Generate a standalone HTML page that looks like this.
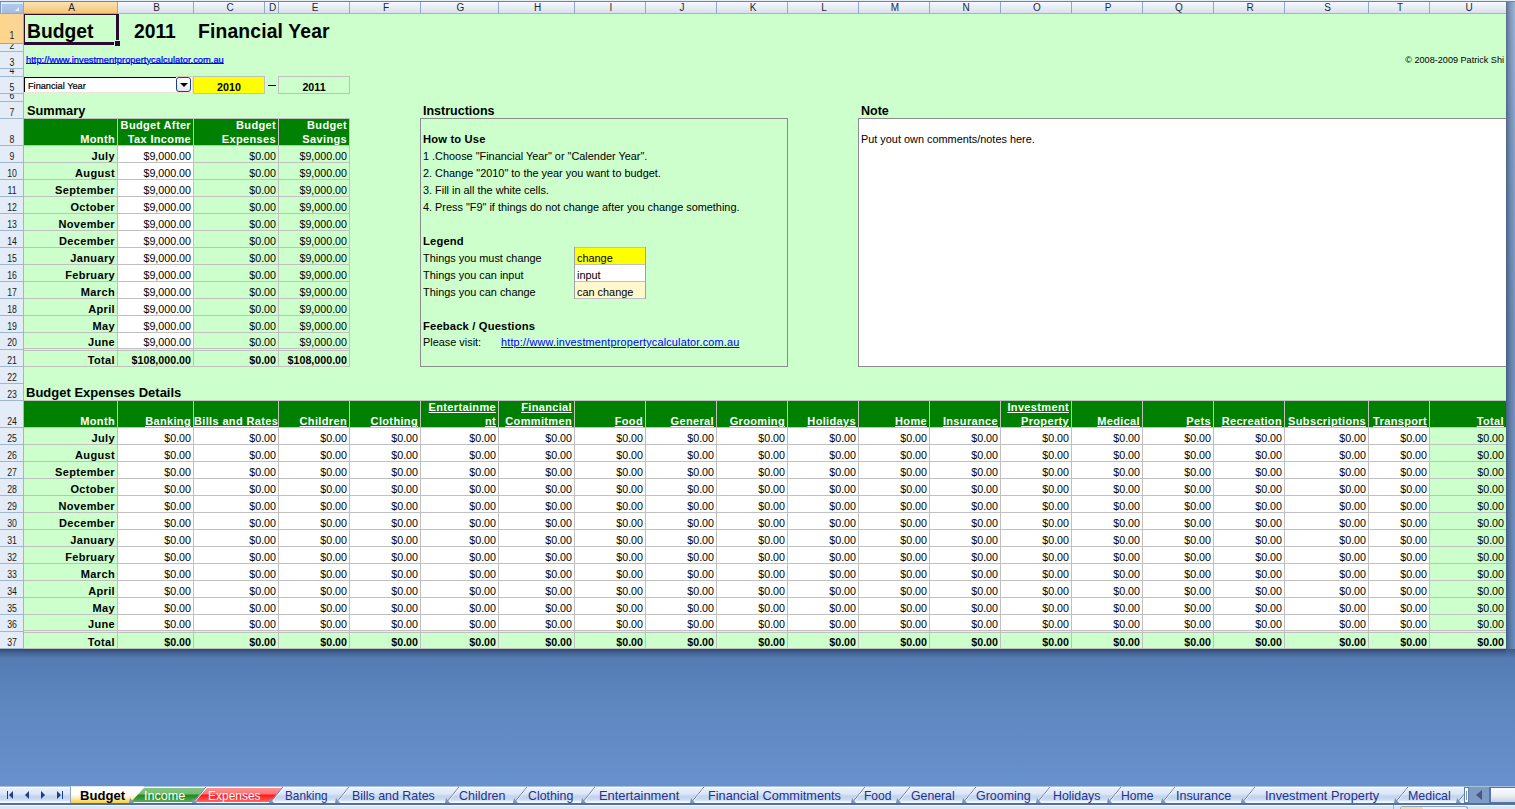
<!DOCTYPE html>
<html><head><meta charset="utf-8"><style>
html,body{margin:0;padding:0;}
body{width:1515px;height:809px;overflow:hidden;position:relative;background:linear-gradient(#587eb4,#6690cb);font-family:"Liberation Sans",sans-serif;}
body>div{position:absolute;}
.t{white-space:nowrap;overflow:visible;}
</style></head><body>
<div style="left:0px;top:0px;width:1515px;height:1px;background:#e3ecf7"></div>
<div style="left:0px;top:1px;width:1515px;height:1px;background:#6787ae"></div>
<div style="left:0px;top:2px;width:1506px;height:11px;background:linear-gradient(#f7f9fc,#e4eaf3 60%,#d8e0ec)"></div>
<div style="left:0px;top:13px;width:1506px;height:1px;background:#9eb6ce"></div>
<div style="left:0px;top:2px;width:23px;height:11px;background:#dfe9f6"></div>
<div style="left:0px;top:2px;width:1px;height:11px;background:#8298b8"></div>
<div style="left:2px;top:4px;width:21px;height:9px;background:linear-gradient(#b0c9ee,#a2bde6)"></div>
<div style="left:15px;top:7px;width:0;height:0;border-left:4px solid transparent;border-bottom:4px solid #e8f0fb"></div>
<div style="left:24px;top:2px;width:93px;height:11px;background:linear-gradient(#fbe3b4,#f8d494 50%,#f4c56e)"></div>
<div style="left:0px;top:13px;width:118px;height:1px;background:#f29436"></div>
<div style="left:23px;top:2px;width:1px;height:12px;background:#f29436"></div>
<div style="left:117px;top:2px;width:1px;height:12px;background:#f29436"></div>
<div style="left:193px;top:2px;width:1px;height:11px;background:#93a6c2"></div>
<div style="left:264px;top:2px;width:1px;height:11px;background:#93a6c2"></div>
<div style="left:278px;top:2px;width:1px;height:11px;background:#93a6c2"></div>
<div style="left:349px;top:2px;width:1px;height:11px;background:#93a6c2"></div>
<div style="left:420px;top:2px;width:1px;height:11px;background:#93a6c2"></div>
<div style="left:498px;top:2px;width:1px;height:11px;background:#93a6c2"></div>
<div style="left:574px;top:2px;width:1px;height:11px;background:#93a6c2"></div>
<div style="left:645px;top:2px;width:1px;height:11px;background:#93a6c2"></div>
<div style="left:716px;top:2px;width:1px;height:11px;background:#93a6c2"></div>
<div style="left:787px;top:2px;width:1px;height:11px;background:#93a6c2"></div>
<div style="left:858px;top:2px;width:1px;height:11px;background:#93a6c2"></div>
<div style="left:929px;top:2px;width:1px;height:11px;background:#93a6c2"></div>
<div style="left:1000px;top:2px;width:1px;height:11px;background:#93a6c2"></div>
<div style="left:1071px;top:2px;width:1px;height:11px;background:#93a6c2"></div>
<div style="left:1142px;top:2px;width:1px;height:11px;background:#93a6c2"></div>
<div style="left:1213px;top:2px;width:1px;height:11px;background:#93a6c2"></div>
<div style="left:1284px;top:2px;width:1px;height:11px;background:#93a6c2"></div>
<div style="left:1368px;top:2px;width:1px;height:11px;background:#93a6c2"></div>
<div style="left:1429px;top:2px;width:1px;height:11px;background:#93a6c2"></div>
<div class="t" style="left:25px;top:2px;width:93px;height:12px;line-height:12px;font-size:10px;text-align:center;color:#1e2a38;">A</div>
<div class="t" style="left:119px;top:2px;width:75px;height:12px;line-height:12px;font-size:10px;text-align:center;color:#1e2a38;">B</div>
<div class="t" style="left:195px;top:2px;width:70px;height:12px;line-height:12px;font-size:10px;text-align:center;color:#1e2a38;">C</div>
<div class="t" style="left:266px;top:2px;width:13px;height:12px;line-height:12px;font-size:10px;text-align:center;color:#1e2a38;">D</div>
<div class="t" style="left:280px;top:2px;width:70px;height:12px;line-height:12px;font-size:10px;text-align:center;color:#1e2a38;">E</div>
<div class="t" style="left:351px;top:2px;width:70px;height:12px;line-height:12px;font-size:10px;text-align:center;color:#1e2a38;">F</div>
<div class="t" style="left:422px;top:2px;width:77px;height:12px;line-height:12px;font-size:10px;text-align:center;color:#1e2a38;">G</div>
<div class="t" style="left:500px;top:2px;width:75px;height:12px;line-height:12px;font-size:10px;text-align:center;color:#1e2a38;">H</div>
<div class="t" style="left:576px;top:2px;width:70px;height:12px;line-height:12px;font-size:10px;text-align:center;color:#1e2a38;">I</div>
<div class="t" style="left:647px;top:2px;width:70px;height:12px;line-height:12px;font-size:10px;text-align:center;color:#1e2a38;">J</div>
<div class="t" style="left:718px;top:2px;width:70px;height:12px;line-height:12px;font-size:10px;text-align:center;color:#1e2a38;">K</div>
<div class="t" style="left:789px;top:2px;width:70px;height:12px;line-height:12px;font-size:10px;text-align:center;color:#1e2a38;">L</div>
<div class="t" style="left:860px;top:2px;width:70px;height:12px;line-height:12px;font-size:10px;text-align:center;color:#1e2a38;">M</div>
<div class="t" style="left:931px;top:2px;width:70px;height:12px;line-height:12px;font-size:10px;text-align:center;color:#1e2a38;">N</div>
<div class="t" style="left:1002px;top:2px;width:70px;height:12px;line-height:12px;font-size:10px;text-align:center;color:#1e2a38;">O</div>
<div class="t" style="left:1073px;top:2px;width:70px;height:12px;line-height:12px;font-size:10px;text-align:center;color:#1e2a38;">P</div>
<div class="t" style="left:1144px;top:2px;width:70px;height:12px;line-height:12px;font-size:10px;text-align:center;color:#1e2a38;">Q</div>
<div class="t" style="left:1215px;top:2px;width:70px;height:12px;line-height:12px;font-size:10px;text-align:center;color:#1e2a38;">R</div>
<div class="t" style="left:1286px;top:2px;width:83px;height:12px;line-height:12px;font-size:10px;text-align:center;color:#1e2a38;">S</div>
<div class="t" style="left:1370px;top:2px;width:60px;height:12px;line-height:12px;font-size:10px;text-align:center;color:#1e2a38;">T</div>
<div class="t" style="left:1431px;top:2px;width:76px;height:12px;line-height:12px;font-size:10px;text-align:center;color:#1e2a38;">U</div>
<div style="left:0px;top:14px;width:23px;height:635px;background:#e4ecf7"></div>
<div style="left:23px;top:14px;width:1px;height:635px;background:#9eb6ce"></div>
<div style="left:0px;top:14px;width:23px;height:29px;background:linear-gradient(90deg,#fdd58c,#fbd595 70%,#f8d49a)"></div>
<div style="left:0px;top:43px;width:24px;height:1px;background:#f29436"></div>
<div style="left:23px;top:14px;width:1px;height:30px;background:#f29436"></div>
<div style="left:0px;top:51px;width:23px;height:1px;background:#9eb6ce"></div>
<div style="left:0px;top:68px;width:23px;height:1px;background:#9eb6ce"></div>
<div style="left:0px;top:76px;width:23px;height:1px;background:#9eb6ce"></div>
<div style="left:0px;top:93px;width:23px;height:1px;background:#9eb6ce"></div>
<div style="left:0px;top:101px;width:23px;height:1px;background:#9eb6ce"></div>
<div style="left:0px;top:118px;width:23px;height:1px;background:#9eb6ce"></div>
<div style="left:0px;top:145px;width:23px;height:1px;background:#9eb6ce"></div>
<div style="left:0px;top:162px;width:23px;height:1px;background:#9eb6ce"></div>
<div style="left:0px;top:179px;width:23px;height:1px;background:#9eb6ce"></div>
<div style="left:0px;top:196px;width:23px;height:1px;background:#9eb6ce"></div>
<div style="left:0px;top:213px;width:23px;height:1px;background:#9eb6ce"></div>
<div style="left:0px;top:230px;width:23px;height:1px;background:#9eb6ce"></div>
<div style="left:0px;top:247px;width:23px;height:1px;background:#9eb6ce"></div>
<div style="left:0px;top:264px;width:23px;height:1px;background:#9eb6ce"></div>
<div style="left:0px;top:281px;width:23px;height:1px;background:#9eb6ce"></div>
<div style="left:0px;top:298px;width:23px;height:1px;background:#9eb6ce"></div>
<div style="left:0px;top:315px;width:23px;height:1px;background:#9eb6ce"></div>
<div style="left:0px;top:332px;width:23px;height:1px;background:#9eb6ce"></div>
<div style="left:0px;top:349px;width:23px;height:1px;background:#9eb6ce"></div>
<div style="left:0px;top:366px;width:23px;height:1px;background:#9eb6ce"></div>
<div style="left:0px;top:383px;width:23px;height:1px;background:#9eb6ce"></div>
<div style="left:0px;top:400px;width:23px;height:1px;background:#9eb6ce"></div>
<div style="left:0px;top:427px;width:23px;height:1px;background:#9eb6ce"></div>
<div style="left:0px;top:444px;width:23px;height:1px;background:#9eb6ce"></div>
<div style="left:0px;top:461px;width:23px;height:1px;background:#9eb6ce"></div>
<div style="left:0px;top:478px;width:23px;height:1px;background:#9eb6ce"></div>
<div style="left:0px;top:495px;width:23px;height:1px;background:#9eb6ce"></div>
<div style="left:0px;top:512px;width:23px;height:1px;background:#9eb6ce"></div>
<div style="left:0px;top:529px;width:23px;height:1px;background:#9eb6ce"></div>
<div style="left:0px;top:546px;width:23px;height:1px;background:#9eb6ce"></div>
<div style="left:0px;top:563px;width:23px;height:1px;background:#9eb6ce"></div>
<div style="left:0px;top:580px;width:23px;height:1px;background:#9eb6ce"></div>
<div style="left:0px;top:597px;width:23px;height:1px;background:#9eb6ce"></div>
<div style="left:0px;top:614px;width:23px;height:1px;background:#9eb6ce"></div>
<div style="left:0px;top:631px;width:23px;height:1px;background:#9eb6ce"></div>
<div style="left:0px;top:648px;width:23px;height:1px;background:#9eb6ce"></div>
<div style="left:0px;top:14px;width:23px;height:29px;overflow:hidden;"><div style="position:absolute;left:0px;width:24px;top:16px;height:12px;line-height:12px;font-size:10px;text-align:center;color:#1a1a1a;white-space:nowrap;transform:scaleX(0.87)">1</div></div>
<div style="left:0px;top:44px;width:23px;height:7px;overflow:hidden;"><div style="position:absolute;left:0px;width:24px;top:-4px;height:12px;line-height:12px;font-size:10px;text-align:center;color:#1a1a1a;white-space:nowrap;transform:scaleX(0.87)">2</div></div>
<div style="left:0px;top:52px;width:23px;height:16px;overflow:hidden;"><div style="position:absolute;left:0px;width:24px;top:5px;height:12px;line-height:12px;font-size:10px;text-align:center;color:#1a1a1a;white-space:nowrap;transform:scaleX(0.87)">3</div></div>
<div style="left:0px;top:69px;width:23px;height:7px;overflow:hidden;"><div style="position:absolute;left:0px;width:24px;top:-4px;height:12px;line-height:12px;font-size:10px;text-align:center;color:#1a1a1a;white-space:nowrap;transform:scaleX(0.87)">4</div></div>
<div style="left:0px;top:77px;width:23px;height:16px;overflow:hidden;"><div style="position:absolute;left:0px;width:24px;top:5px;height:12px;line-height:12px;font-size:10px;text-align:center;color:#1a1a1a;white-space:nowrap;transform:scaleX(0.87)">5</div></div>
<div style="left:0px;top:94px;width:23px;height:7px;overflow:hidden;"><div style="position:absolute;left:0px;width:24px;top:-4px;height:12px;line-height:12px;font-size:10px;text-align:center;color:#1a1a1a;white-space:nowrap;transform:scaleX(0.87)">6</div></div>
<div style="left:0px;top:102px;width:23px;height:16px;overflow:hidden;"><div style="position:absolute;left:0px;width:24px;top:5px;height:12px;line-height:12px;font-size:10px;text-align:center;color:#1a1a1a;white-space:nowrap;transform:scaleX(0.87)">7</div></div>
<div style="left:0px;top:119px;width:23px;height:26px;overflow:hidden;"><div style="position:absolute;left:0px;width:24px;top:15px;height:12px;line-height:12px;font-size:10px;text-align:center;color:#1a1a1a;white-space:nowrap;transform:scaleX(0.87)">8</div></div>
<div style="left:0px;top:146px;width:23px;height:16px;overflow:hidden;"><div style="position:absolute;left:0px;width:24px;top:5px;height:12px;line-height:12px;font-size:10px;text-align:center;color:#1a1a1a;white-space:nowrap;transform:scaleX(0.87)">9</div></div>
<div style="left:0px;top:163px;width:23px;height:16px;overflow:hidden;"><div style="position:absolute;left:0px;width:24px;top:5px;height:12px;line-height:12px;font-size:10px;text-align:center;color:#1a1a1a;white-space:nowrap;transform:scaleX(0.87)">10</div></div>
<div style="left:0px;top:180px;width:23px;height:16px;overflow:hidden;"><div style="position:absolute;left:0px;width:24px;top:5px;height:12px;line-height:12px;font-size:10px;text-align:center;color:#1a1a1a;white-space:nowrap;transform:scaleX(0.87)">11</div></div>
<div style="left:0px;top:197px;width:23px;height:16px;overflow:hidden;"><div style="position:absolute;left:0px;width:24px;top:5px;height:12px;line-height:12px;font-size:10px;text-align:center;color:#1a1a1a;white-space:nowrap;transform:scaleX(0.87)">12</div></div>
<div style="left:0px;top:214px;width:23px;height:16px;overflow:hidden;"><div style="position:absolute;left:0px;width:24px;top:5px;height:12px;line-height:12px;font-size:10px;text-align:center;color:#1a1a1a;white-space:nowrap;transform:scaleX(0.87)">13</div></div>
<div style="left:0px;top:231px;width:23px;height:16px;overflow:hidden;"><div style="position:absolute;left:0px;width:24px;top:5px;height:12px;line-height:12px;font-size:10px;text-align:center;color:#1a1a1a;white-space:nowrap;transform:scaleX(0.87)">14</div></div>
<div style="left:0px;top:248px;width:23px;height:16px;overflow:hidden;"><div style="position:absolute;left:0px;width:24px;top:5px;height:12px;line-height:12px;font-size:10px;text-align:center;color:#1a1a1a;white-space:nowrap;transform:scaleX(0.87)">15</div></div>
<div style="left:0px;top:265px;width:23px;height:16px;overflow:hidden;"><div style="position:absolute;left:0px;width:24px;top:5px;height:12px;line-height:12px;font-size:10px;text-align:center;color:#1a1a1a;white-space:nowrap;transform:scaleX(0.87)">16</div></div>
<div style="left:0px;top:282px;width:23px;height:16px;overflow:hidden;"><div style="position:absolute;left:0px;width:24px;top:5px;height:12px;line-height:12px;font-size:10px;text-align:center;color:#1a1a1a;white-space:nowrap;transform:scaleX(0.87)">17</div></div>
<div style="left:0px;top:299px;width:23px;height:16px;overflow:hidden;"><div style="position:absolute;left:0px;width:24px;top:5px;height:12px;line-height:12px;font-size:10px;text-align:center;color:#1a1a1a;white-space:nowrap;transform:scaleX(0.87)">18</div></div>
<div style="left:0px;top:316px;width:23px;height:16px;overflow:hidden;"><div style="position:absolute;left:0px;width:24px;top:5px;height:12px;line-height:12px;font-size:10px;text-align:center;color:#1a1a1a;white-space:nowrap;transform:scaleX(0.87)">19</div></div>
<div style="left:0px;top:333px;width:23px;height:16px;overflow:hidden;"><div style="position:absolute;left:0px;width:24px;top:4px;height:12px;line-height:12px;font-size:10px;text-align:center;color:#1a1a1a;white-space:nowrap;transform:scaleX(0.87)">20</div></div>
<div style="left:0px;top:350px;width:23px;height:16px;overflow:hidden;"><div style="position:absolute;left:0px;width:24px;top:5px;height:12px;line-height:12px;font-size:10px;text-align:center;color:#1a1a1a;white-space:nowrap;transform:scaleX(0.87)">21</div></div>
<div style="left:0px;top:367px;width:23px;height:16px;overflow:hidden;"><div style="position:absolute;left:0px;width:24px;top:5px;height:12px;line-height:12px;font-size:10px;text-align:center;color:#1a1a1a;white-space:nowrap;transform:scaleX(0.87)">22</div></div>
<div style="left:0px;top:384px;width:23px;height:16px;overflow:hidden;"><div style="position:absolute;left:0px;width:24px;top:5px;height:12px;line-height:12px;font-size:10px;text-align:center;color:#1a1a1a;white-space:nowrap;transform:scaleX(0.87)">23</div></div>
<div style="left:0px;top:401px;width:23px;height:26px;overflow:hidden;"><div style="position:absolute;left:0px;width:24px;top:15px;height:12px;line-height:12px;font-size:10px;text-align:center;color:#1a1a1a;white-space:nowrap;transform:scaleX(0.87)">24</div></div>
<div style="left:0px;top:428px;width:23px;height:16px;overflow:hidden;"><div style="position:absolute;left:0px;width:24px;top:5px;height:12px;line-height:12px;font-size:10px;text-align:center;color:#1a1a1a;white-space:nowrap;transform:scaleX(0.87)">25</div></div>
<div style="left:0px;top:445px;width:23px;height:16px;overflow:hidden;"><div style="position:absolute;left:0px;width:24px;top:5px;height:12px;line-height:12px;font-size:10px;text-align:center;color:#1a1a1a;white-space:nowrap;transform:scaleX(0.87)">26</div></div>
<div style="left:0px;top:462px;width:23px;height:16px;overflow:hidden;"><div style="position:absolute;left:0px;width:24px;top:5px;height:12px;line-height:12px;font-size:10px;text-align:center;color:#1a1a1a;white-space:nowrap;transform:scaleX(0.87)">27</div></div>
<div style="left:0px;top:479px;width:23px;height:16px;overflow:hidden;"><div style="position:absolute;left:0px;width:24px;top:5px;height:12px;line-height:12px;font-size:10px;text-align:center;color:#1a1a1a;white-space:nowrap;transform:scaleX(0.87)">28</div></div>
<div style="left:0px;top:496px;width:23px;height:16px;overflow:hidden;"><div style="position:absolute;left:0px;width:24px;top:5px;height:12px;line-height:12px;font-size:10px;text-align:center;color:#1a1a1a;white-space:nowrap;transform:scaleX(0.87)">29</div></div>
<div style="left:0px;top:513px;width:23px;height:16px;overflow:hidden;"><div style="position:absolute;left:0px;width:24px;top:5px;height:12px;line-height:12px;font-size:10px;text-align:center;color:#1a1a1a;white-space:nowrap;transform:scaleX(0.87)">30</div></div>
<div style="left:0px;top:530px;width:23px;height:16px;overflow:hidden;"><div style="position:absolute;left:0px;width:24px;top:5px;height:12px;line-height:12px;font-size:10px;text-align:center;color:#1a1a1a;white-space:nowrap;transform:scaleX(0.87)">31</div></div>
<div style="left:0px;top:547px;width:23px;height:16px;overflow:hidden;"><div style="position:absolute;left:0px;width:24px;top:5px;height:12px;line-height:12px;font-size:10px;text-align:center;color:#1a1a1a;white-space:nowrap;transform:scaleX(0.87)">32</div></div>
<div style="left:0px;top:564px;width:23px;height:16px;overflow:hidden;"><div style="position:absolute;left:0px;width:24px;top:5px;height:12px;line-height:12px;font-size:10px;text-align:center;color:#1a1a1a;white-space:nowrap;transform:scaleX(0.87)">33</div></div>
<div style="left:0px;top:581px;width:23px;height:16px;overflow:hidden;"><div style="position:absolute;left:0px;width:24px;top:5px;height:12px;line-height:12px;font-size:10px;text-align:center;color:#1a1a1a;white-space:nowrap;transform:scaleX(0.87)">34</div></div>
<div style="left:0px;top:598px;width:23px;height:16px;overflow:hidden;"><div style="position:absolute;left:0px;width:24px;top:5px;height:12px;line-height:12px;font-size:10px;text-align:center;color:#1a1a1a;white-space:nowrap;transform:scaleX(0.87)">35</div></div>
<div style="left:0px;top:615px;width:23px;height:16px;overflow:hidden;"><div style="position:absolute;left:0px;width:24px;top:4px;height:12px;line-height:12px;font-size:10px;text-align:center;color:#1a1a1a;white-space:nowrap;transform:scaleX(0.87)">36</div></div>
<div style="left:0px;top:632px;width:23px;height:16px;overflow:hidden;"><div style="position:absolute;left:0px;width:24px;top:5px;height:12px;line-height:12px;font-size:10px;text-align:center;color:#1a1a1a;white-space:nowrap;transform:scaleX(0.87)">37</div></div>
<div style="left:24px;top:14px;width:1482px;height:635px;background:#ccffcc"></div>
<div style="left:1506px;top:2px;width:9px;height:648px;background:linear-gradient(90deg,rgba(30,45,70,0.55),rgba(30,45,70,0.25) 45%,rgba(30,45,70,0.05)),linear-gradient(#a3bbe0,#8eaad4 20%,#7a9ac8 50%,#6e93c9)"></div>
<div style="left:0px;top:649px;width:1515px;height:137px;background:linear-gradient(#5279b0,#5e87c0 40%,#6892cd)"></div>
<div class="t" style="left:27px;top:20px;width:173px;height:23px;line-height:23px;font-size:19.3px;text-align:left;color:#000;font-weight:bold;">Budget</div>
<div class="t" style="left:134px;top:20px;width:66px;height:23px;line-height:23px;font-size:19.3px;text-align:left;color:#000;font-weight:bold;">2011</div>
<div class="t" style="left:198px;top:20px;width:202px;height:23px;line-height:23px;font-size:19.3px;text-align:left;color:#000;font-weight:bold;letter-spacing:0.17px;">Financial Year</div>
<div style="left:24px;top:14px;width:1px;height:30px;background:#2a0a35"></div>
<div style="left:24px;top:14px;width:95px;height:1px;background:#2a0a35"></div>
<div style="left:116px;top:14px;width:3px;height:26px;background:#2a0a35"></div>
<div style="left:24px;top:42px;width:90px;height:3px;background:#2a0a35"></div>
<div style="left:115px;top:41px;width:5px;height:5px;background:#2a0a35"></div>
<div class="t" style="left:26px;top:55px;width:274px;height:11px;line-height:11px;font-size:9.3px;text-align:left;color:#0000ff;text-decoration:underline;letter-spacing:0.02px;text-underline-offset:0px;-webkit-text-stroke:0.25px #0000ff;">http://www.investmentpropertycalculator.com.au</div>
<div class="t" style="left:1300px;top:55px;width:204px;height:11px;line-height:11px;font-size:9.1px;text-align:right;color:#000;">&copy; 2008-2009 Patrick Shi</div>
<div style="left:24px;top:77px;width:169px;height:16px;background:#fff"></div>
<div style="left:24px;top:77px;width:152px;height:1px;background:#000"></div>
<div style="left:176px;top:76px;width:17px;height:1px;background:#d8cbb8"></div>
<div style="left:192px;top:76px;width:1px;height:17px;background:#e8e0d4"></div>
<div style="left:24px;top:77px;width:1px;height:15px;background:#000"></div>
<div style="left:24px;top:92px;width:169px;height:1px;background:#ece4d6"></div>
<div class="t" style="left:28px;top:81px;width:142px;height:11px;line-height:11px;font-size:9.2px;text-align:left;color:#000;-webkit-text-stroke:0.2px #000;">Financial Year</div>
<div style="left:176px;top:77px;width:15px;height:15px;background:linear-gradient(#ffffff,#f3f1f3 60%,#e6e6ec);border:1px solid #1a4288;border-radius:3px;box-sizing:border-box"></div>
<div style="left:179.5px;top:83px;width:0;height:0;border-left:4px solid transparent;border-right:4px solid transparent;border-top:4.5px solid #000"></div>
<div style="left:194px;top:77px;width:70px;height:16px;background:#ffff00"></div>
<div style="left:193px;top:76px;width:72px;height:1px;background:#c0c0c0"></div>
<div style="left:193px;top:93px;width:72px;height:1px;background:#c0c0c0"></div>
<div style="left:193px;top:76px;width:1px;height:18px;background:#c0c0c0"></div>
<div style="left:264px;top:76px;width:1px;height:18px;background:#c0c0c0"></div>
<div class="t" style="left:194px;top:81px;width:70px;height:13px;line-height:13px;font-size:10.7px;text-align:center;color:#000;font-weight:bold;">2010</div>
<div style="left:268px;top:85px;width:8px;height:1px;background:#000"></div>
<div style="left:278px;top:76px;width:72px;height:1px;background:#c0c0c0"></div>
<div style="left:278px;top:93px;width:72px;height:1px;background:#c0c0c0"></div>
<div style="left:278px;top:76px;width:1px;height:18px;background:#c0c0c0"></div>
<div style="left:349px;top:76px;width:1px;height:18px;background:#c0c0c0"></div>
<div class="t" style="left:279px;top:81px;width:70px;height:13px;line-height:13px;font-size:10.7px;text-align:center;color:#000;font-weight:bold;">2011</div>
<div class="t" style="left:27px;top:103px;width:173px;height:15px;line-height:15px;font-size:12.8px;text-align:left;color:#000;font-weight:bold;">Summary</div>
<div class="t" style="left:423px;top:104px;width:177px;height:15px;line-height:15px;font-size:12.5px;text-align:left;color:#000;font-weight:bold;">Instructions</div>
<div class="t" style="left:861px;top:104px;width:139px;height:15px;line-height:15px;font-size:12.5px;text-align:left;color:#000;font-weight:bold;">Note</div>
<div style="left:24px;top:119px;width:325px;height:26px;background:#008000"></div>
<div style="left:24px;top:146px;width:93px;height:16px;background:#ccffcc"></div>
<div style="left:118px;top:146px;width:75px;height:16px;background:#ffffff"></div>
<div style="left:194px;top:146px;width:84px;height:16px;background:#ccffcc"></div>
<div style="left:279px;top:146px;width:70px;height:16px;background:#ccffcc"></div>
<div style="left:24px;top:163px;width:93px;height:16px;background:#ccffcc"></div>
<div style="left:118px;top:163px;width:75px;height:16px;background:#ffffff"></div>
<div style="left:194px;top:163px;width:84px;height:16px;background:#ccffcc"></div>
<div style="left:279px;top:163px;width:70px;height:16px;background:#ccffcc"></div>
<div style="left:24px;top:180px;width:93px;height:16px;background:#ccffcc"></div>
<div style="left:118px;top:180px;width:75px;height:16px;background:#ffffff"></div>
<div style="left:194px;top:180px;width:84px;height:16px;background:#ccffcc"></div>
<div style="left:279px;top:180px;width:70px;height:16px;background:#ccffcc"></div>
<div style="left:24px;top:197px;width:93px;height:16px;background:#ccffcc"></div>
<div style="left:118px;top:197px;width:75px;height:16px;background:#ffffff"></div>
<div style="left:194px;top:197px;width:84px;height:16px;background:#ccffcc"></div>
<div style="left:279px;top:197px;width:70px;height:16px;background:#ccffcc"></div>
<div style="left:24px;top:214px;width:93px;height:16px;background:#ccffcc"></div>
<div style="left:118px;top:214px;width:75px;height:16px;background:#ffffff"></div>
<div style="left:194px;top:214px;width:84px;height:16px;background:#ccffcc"></div>
<div style="left:279px;top:214px;width:70px;height:16px;background:#ccffcc"></div>
<div style="left:24px;top:231px;width:93px;height:16px;background:#ccffcc"></div>
<div style="left:118px;top:231px;width:75px;height:16px;background:#ffffff"></div>
<div style="left:194px;top:231px;width:84px;height:16px;background:#ccffcc"></div>
<div style="left:279px;top:231px;width:70px;height:16px;background:#ccffcc"></div>
<div style="left:24px;top:248px;width:93px;height:16px;background:#ccffcc"></div>
<div style="left:118px;top:248px;width:75px;height:16px;background:#ffffff"></div>
<div style="left:194px;top:248px;width:84px;height:16px;background:#ccffcc"></div>
<div style="left:279px;top:248px;width:70px;height:16px;background:#ccffcc"></div>
<div style="left:24px;top:265px;width:93px;height:16px;background:#ccffcc"></div>
<div style="left:118px;top:265px;width:75px;height:16px;background:#ffffff"></div>
<div style="left:194px;top:265px;width:84px;height:16px;background:#ccffcc"></div>
<div style="left:279px;top:265px;width:70px;height:16px;background:#ccffcc"></div>
<div style="left:24px;top:282px;width:93px;height:16px;background:#ccffcc"></div>
<div style="left:118px;top:282px;width:75px;height:16px;background:#ffffff"></div>
<div style="left:194px;top:282px;width:84px;height:16px;background:#ccffcc"></div>
<div style="left:279px;top:282px;width:70px;height:16px;background:#ccffcc"></div>
<div style="left:24px;top:299px;width:93px;height:16px;background:#ccffcc"></div>
<div style="left:118px;top:299px;width:75px;height:16px;background:#ffffff"></div>
<div style="left:194px;top:299px;width:84px;height:16px;background:#ccffcc"></div>
<div style="left:279px;top:299px;width:70px;height:16px;background:#ccffcc"></div>
<div style="left:24px;top:316px;width:93px;height:16px;background:#ccffcc"></div>
<div style="left:118px;top:316px;width:75px;height:16px;background:#ffffff"></div>
<div style="left:194px;top:316px;width:84px;height:16px;background:#ccffcc"></div>
<div style="left:279px;top:316px;width:70px;height:16px;background:#ccffcc"></div>
<div style="left:24px;top:333px;width:93px;height:16px;background:#ccffcc"></div>
<div style="left:118px;top:333px;width:75px;height:16px;background:#ffffff"></div>
<div style="left:194px;top:333px;width:84px;height:16px;background:#ccffcc"></div>
<div style="left:279px;top:333px;width:70px;height:16px;background:#ccffcc"></div>
<div style="left:24px;top:350px;width:93px;height:16px;background:#ccffcc"></div>
<div style="left:118px;top:350px;width:75px;height:16px;background:#ccffcc"></div>
<div style="left:194px;top:350px;width:84px;height:16px;background:#ccffcc"></div>
<div style="left:279px;top:350px;width:70px;height:16px;background:#ccffcc"></div>
<div style="left:24px;top:118px;width:326px;height:1px;background:#c0c0c0"></div>
<div style="left:24px;top:145px;width:326px;height:1px;background:#c0c0c0"></div>
<div style="left:24px;top:162px;width:326px;height:1px;background:#c0c0c0"></div>
<div style="left:24px;top:179px;width:326px;height:1px;background:#c0c0c0"></div>
<div style="left:24px;top:196px;width:326px;height:1px;background:#c0c0c0"></div>
<div style="left:24px;top:213px;width:326px;height:1px;background:#c0c0c0"></div>
<div style="left:24px;top:230px;width:326px;height:1px;background:#c0c0c0"></div>
<div style="left:24px;top:247px;width:326px;height:1px;background:#c0c0c0"></div>
<div style="left:24px;top:264px;width:326px;height:1px;background:#c0c0c0"></div>
<div style="left:24px;top:281px;width:326px;height:1px;background:#c0c0c0"></div>
<div style="left:24px;top:298px;width:326px;height:1px;background:#c0c0c0"></div>
<div style="left:24px;top:315px;width:326px;height:1px;background:#c0c0c0"></div>
<div style="left:24px;top:332px;width:326px;height:1px;background:#c0c0c0"></div>
<div style="left:24px;top:348px;width:326px;height:1px;background:#c0c0c0"></div>
<div style="left:24px;top:350px;width:326px;height:1px;background:#c0c0c0"></div>
<div style="left:24px;top:366px;width:326px;height:1px;background:#c0c0c0"></div>
<div style="left:117px;top:118px;width:1px;height:249px;background:#c0c0c0"></div>
<div style="left:193px;top:118px;width:1px;height:249px;background:#c0c0c0"></div>
<div style="left:278px;top:118px;width:1px;height:249px;background:#c0c0c0"></div>
<div style="left:349px;top:118px;width:1px;height:249px;background:#c0c0c0"></div>
<div class="t" style="left:24px;top:133px;width:91px;height:13px;line-height:13px;font-size:11px;text-align:right;color:#fff;font-weight:bold;letter-spacing:0.35px;">Month</div>
<div class="t" style="left:118px;top:133px;width:73px;height:13px;line-height:13px;font-size:11px;text-align:right;color:#fff;font-weight:bold;letter-spacing:0.35px;">Tax Income</div>
<div class="t" style="left:118px;top:119px;width:73px;height:13px;line-height:13px;font-size:11px;text-align:right;color:#fff;font-weight:bold;letter-spacing:0.35px;">Budget After</div>
<div class="t" style="left:194px;top:133px;width:82px;height:13px;line-height:13px;font-size:11px;text-align:right;color:#fff;font-weight:bold;letter-spacing:0.35px;">Expenses</div>
<div class="t" style="left:194px;top:119px;width:82px;height:13px;line-height:13px;font-size:11px;text-align:right;color:#fff;font-weight:bold;letter-spacing:0.35px;">Budget</div>
<div class="t" style="left:279px;top:133px;width:68px;height:13px;line-height:13px;font-size:11px;text-align:right;color:#fff;font-weight:bold;letter-spacing:0.35px;">Savings</div>
<div class="t" style="left:279px;top:119px;width:68px;height:13px;line-height:13px;font-size:11px;text-align:right;color:#fff;font-weight:bold;letter-spacing:0.35px;">Budget</div>
<div class="t" style="left:24px;top:150px;width:91px;height:13px;line-height:13px;font-size:11px;text-align:right;color:#000;font-weight:bold;letter-spacing:0.35px;">July</div>
<div class="t" style="left:118px;top:150px;width:73px;height:13px;line-height:13px;font-size:10.7px;text-align:right;color:#000;">$9,000.00</div>
<div class="t" style="left:194px;top:150px;width:82px;height:13px;line-height:13px;font-size:10.7px;text-align:right;color:#000;">$0.00</div>
<div class="t" style="left:279px;top:150px;width:68px;height:13px;line-height:13px;font-size:10.7px;text-align:right;color:#000;">$9,000.00</div>
<div class="t" style="left:24px;top:167px;width:91px;height:13px;line-height:13px;font-size:11px;text-align:right;color:#000;font-weight:bold;letter-spacing:0.35px;">August</div>
<div class="t" style="left:118px;top:167px;width:73px;height:13px;line-height:13px;font-size:10.7px;text-align:right;color:#000;">$9,000.00</div>
<div class="t" style="left:194px;top:167px;width:82px;height:13px;line-height:13px;font-size:10.7px;text-align:right;color:#000;">$0.00</div>
<div class="t" style="left:279px;top:167px;width:68px;height:13px;line-height:13px;font-size:10.7px;text-align:right;color:#000;">$9,000.00</div>
<div class="t" style="left:24px;top:184px;width:91px;height:13px;line-height:13px;font-size:11px;text-align:right;color:#000;font-weight:bold;letter-spacing:0.35px;">September</div>
<div class="t" style="left:118px;top:184px;width:73px;height:13px;line-height:13px;font-size:10.7px;text-align:right;color:#000;">$9,000.00</div>
<div class="t" style="left:194px;top:184px;width:82px;height:13px;line-height:13px;font-size:10.7px;text-align:right;color:#000;">$0.00</div>
<div class="t" style="left:279px;top:184px;width:68px;height:13px;line-height:13px;font-size:10.7px;text-align:right;color:#000;">$9,000.00</div>
<div class="t" style="left:24px;top:201px;width:91px;height:13px;line-height:13px;font-size:11px;text-align:right;color:#000;font-weight:bold;letter-spacing:0.35px;">October</div>
<div class="t" style="left:118px;top:201px;width:73px;height:13px;line-height:13px;font-size:10.7px;text-align:right;color:#000;">$9,000.00</div>
<div class="t" style="left:194px;top:201px;width:82px;height:13px;line-height:13px;font-size:10.7px;text-align:right;color:#000;">$0.00</div>
<div class="t" style="left:279px;top:201px;width:68px;height:13px;line-height:13px;font-size:10.7px;text-align:right;color:#000;">$9,000.00</div>
<div class="t" style="left:24px;top:218px;width:91px;height:13px;line-height:13px;font-size:11px;text-align:right;color:#000;font-weight:bold;letter-spacing:0.35px;">November</div>
<div class="t" style="left:118px;top:218px;width:73px;height:13px;line-height:13px;font-size:10.7px;text-align:right;color:#000;">$9,000.00</div>
<div class="t" style="left:194px;top:218px;width:82px;height:13px;line-height:13px;font-size:10.7px;text-align:right;color:#000;">$0.00</div>
<div class="t" style="left:279px;top:218px;width:68px;height:13px;line-height:13px;font-size:10.7px;text-align:right;color:#000;">$9,000.00</div>
<div class="t" style="left:24px;top:235px;width:91px;height:13px;line-height:13px;font-size:11px;text-align:right;color:#000;font-weight:bold;letter-spacing:0.35px;">December</div>
<div class="t" style="left:118px;top:235px;width:73px;height:13px;line-height:13px;font-size:10.7px;text-align:right;color:#000;">$9,000.00</div>
<div class="t" style="left:194px;top:235px;width:82px;height:13px;line-height:13px;font-size:10.7px;text-align:right;color:#000;">$0.00</div>
<div class="t" style="left:279px;top:235px;width:68px;height:13px;line-height:13px;font-size:10.7px;text-align:right;color:#000;">$9,000.00</div>
<div class="t" style="left:24px;top:252px;width:91px;height:13px;line-height:13px;font-size:11px;text-align:right;color:#000;font-weight:bold;letter-spacing:0.35px;">January</div>
<div class="t" style="left:118px;top:252px;width:73px;height:13px;line-height:13px;font-size:10.7px;text-align:right;color:#000;">$9,000.00</div>
<div class="t" style="left:194px;top:252px;width:82px;height:13px;line-height:13px;font-size:10.7px;text-align:right;color:#000;">$0.00</div>
<div class="t" style="left:279px;top:252px;width:68px;height:13px;line-height:13px;font-size:10.7px;text-align:right;color:#000;">$9,000.00</div>
<div class="t" style="left:24px;top:269px;width:91px;height:13px;line-height:13px;font-size:11px;text-align:right;color:#000;font-weight:bold;letter-spacing:0.35px;">February</div>
<div class="t" style="left:118px;top:269px;width:73px;height:13px;line-height:13px;font-size:10.7px;text-align:right;color:#000;">$9,000.00</div>
<div class="t" style="left:194px;top:269px;width:82px;height:13px;line-height:13px;font-size:10.7px;text-align:right;color:#000;">$0.00</div>
<div class="t" style="left:279px;top:269px;width:68px;height:13px;line-height:13px;font-size:10.7px;text-align:right;color:#000;">$9,000.00</div>
<div class="t" style="left:24px;top:286px;width:91px;height:13px;line-height:13px;font-size:11px;text-align:right;color:#000;font-weight:bold;letter-spacing:0.35px;">March</div>
<div class="t" style="left:118px;top:286px;width:73px;height:13px;line-height:13px;font-size:10.7px;text-align:right;color:#000;">$9,000.00</div>
<div class="t" style="left:194px;top:286px;width:82px;height:13px;line-height:13px;font-size:10.7px;text-align:right;color:#000;">$0.00</div>
<div class="t" style="left:279px;top:286px;width:68px;height:13px;line-height:13px;font-size:10.7px;text-align:right;color:#000;">$9,000.00</div>
<div class="t" style="left:24px;top:303px;width:91px;height:13px;line-height:13px;font-size:11px;text-align:right;color:#000;font-weight:bold;letter-spacing:0.35px;">April</div>
<div class="t" style="left:118px;top:303px;width:73px;height:13px;line-height:13px;font-size:10.7px;text-align:right;color:#000;">$9,000.00</div>
<div class="t" style="left:194px;top:303px;width:82px;height:13px;line-height:13px;font-size:10.7px;text-align:right;color:#000;">$0.00</div>
<div class="t" style="left:279px;top:303px;width:68px;height:13px;line-height:13px;font-size:10.7px;text-align:right;color:#000;">$9,000.00</div>
<div class="t" style="left:24px;top:320px;width:91px;height:13px;line-height:13px;font-size:11px;text-align:right;color:#000;font-weight:bold;letter-spacing:0.35px;">May</div>
<div class="t" style="left:118px;top:320px;width:73px;height:13px;line-height:13px;font-size:10.7px;text-align:right;color:#000;">$9,000.00</div>
<div class="t" style="left:194px;top:320px;width:82px;height:13px;line-height:13px;font-size:10.7px;text-align:right;color:#000;">$0.00</div>
<div class="t" style="left:279px;top:320px;width:68px;height:13px;line-height:13px;font-size:10.7px;text-align:right;color:#000;">$9,000.00</div>
<div class="t" style="left:24px;top:336px;width:91px;height:13px;line-height:13px;font-size:11px;text-align:right;color:#000;font-weight:bold;letter-spacing:0.35px;">June</div>
<div class="t" style="left:118px;top:336px;width:73px;height:13px;line-height:13px;font-size:10.7px;text-align:right;color:#000;">$9,000.00</div>
<div class="t" style="left:194px;top:336px;width:82px;height:13px;line-height:13px;font-size:10.7px;text-align:right;color:#000;">$0.00</div>
<div class="t" style="left:279px;top:336px;width:68px;height:13px;line-height:13px;font-size:10.7px;text-align:right;color:#000;">$9,000.00</div>
<div class="t" style="left:24px;top:354px;width:91px;height:13px;line-height:13px;font-size:11px;text-align:right;color:#000;font-weight:bold;letter-spacing:0.35px;">Total</div>
<div class="t" style="left:118px;top:354px;width:73px;height:13px;line-height:13px;font-size:10.7px;text-align:right;color:#000;font-weight:bold;">$108,000.00</div>
<div class="t" style="left:194px;top:354px;width:82px;height:13px;line-height:13px;font-size:10.7px;text-align:right;color:#000;font-weight:bold;">$0.00</div>
<div class="t" style="left:279px;top:354px;width:68px;height:13px;line-height:13px;font-size:10.7px;text-align:right;color:#000;font-weight:bold;">$108,000.00</div>
<div style="left:420px;top:118px;width:368px;height:249px;border:1px solid #8c8c8c;box-sizing:border-box"></div>
<div class="t" style="left:423px;top:133px;width:377px;height:13px;line-height:13px;font-size:11.2px;text-align:left;color:#000;font-weight:bold;letter-spacing:0.17px;">How to Use</div>
<div class="t" style="left:423px;top:150px;width:377px;height:13px;line-height:13px;font-size:10.9px;text-align:left;color:#000;">1 .Choose "Financial Year" or "Calender Year".</div>
<div class="t" style="left:423px;top:167px;width:377px;height:13px;line-height:13px;font-size:10.9px;text-align:left;color:#000;">2. Change "2010" to the year you want to budget.</div>
<div class="t" style="left:423px;top:184px;width:377px;height:13px;line-height:13px;font-size:10.9px;text-align:left;color:#000;">3. Fill in all the white cells.</div>
<div class="t" style="left:423px;top:201px;width:377px;height:13px;line-height:13px;font-size:10.9px;text-align:left;color:#000;">4. Press "F9" if things do not change after you change something.</div>
<div class="t" style="left:423px;top:235px;width:377px;height:13px;line-height:13px;font-size:11.2px;text-align:left;color:#000;font-weight:bold;letter-spacing:0.17px;">Legend</div>
<div class="t" style="left:423px;top:252px;width:377px;height:13px;line-height:13px;font-size:10.9px;text-align:left;color:#000;">Things you must change</div>
<div class="t" style="left:423px;top:269px;width:377px;height:13px;line-height:13px;font-size:10.9px;text-align:left;color:#000;">Things you can input</div>
<div class="t" style="left:423px;top:286px;width:377px;height:13px;line-height:13px;font-size:10.9px;text-align:left;color:#000;">Things you can change</div>
<div style="left:575px;top:248px;width:70px;height:16px;background:#ffff00"></div>
<div style="left:575px;top:265px;width:70px;height:16px;background:#ffffff"></div>
<div style="left:575px;top:282px;width:70px;height:16px;background:#fff8cc"></div>
<div style="left:574px;top:247px;width:72px;height:1px;background:#c0c0c0"></div>
<div style="left:574px;top:264px;width:72px;height:1px;background:#c0c0c0"></div>
<div style="left:574px;top:281px;width:72px;height:1px;background:#c0c0c0"></div>
<div style="left:574px;top:298px;width:72px;height:1px;background:#c0c0c0"></div>
<div style="left:574px;top:247px;width:1px;height:52px;background:#a0a0a0"></div>
<div style="left:645px;top:247px;width:1px;height:52px;background:#a0a0a0"></div>
<div class="t" style="left:577px;top:252px;width:223px;height:13px;line-height:13px;font-size:10.9px;text-align:left;color:#000;">change</div>
<div class="t" style="left:577px;top:269px;width:223px;height:13px;line-height:13px;font-size:10.9px;text-align:left;color:#000;">input</div>
<div class="t" style="left:577px;top:286px;width:223px;height:13px;line-height:13px;font-size:10.9px;text-align:left;color:#000;">can change</div>
<div class="t" style="left:423px;top:320px;width:377px;height:13px;line-height:13px;font-size:11.2px;text-align:left;color:#000;font-weight:bold;letter-spacing:0.17px;">Feeback / Questions</div>
<div class="t" style="left:423px;top:336px;width:377px;height:13px;line-height:13px;font-size:10.9px;text-align:left;color:#000;">Please visit:</div>
<div class="t" style="left:501px;top:336px;width:299px;height:13px;line-height:13px;font-size:10.9px;text-align:left;color:#0000ff;text-decoration:underline;letter-spacing:0.17px;">http://www.investmentpropertycalculator.com.au</div>
<div style="left:858px;top:118px;width:648px;height:249px;background:#fff;border:1px solid #8c8c8c;border-right:none;box-sizing:border-box"></div>
<div class="t" style="left:861px;top:133px;width:539px;height:13px;line-height:13px;font-size:10.9px;text-align:left;color:#000;">Put yout own comments/notes here.</div>
<div class="t" style="left:26px;top:385px;width:374px;height:16px;line-height:16px;font-size:13.0px;text-align:left;color:#000;font-weight:bold;">Budget Expenses Details</div>
<div style="left:24px;top:401px;width:1482px;height:26px;background:#008000"></div>
<div style="left:24px;top:428px;width:93px;height:16px;background:#ccffcc"></div>
<div style="left:118px;top:428px;width:75px;height:16px;background:#ffffff"></div>
<div style="left:194px;top:428px;width:84px;height:16px;background:#ffffff"></div>
<div style="left:279px;top:428px;width:70px;height:16px;background:#ffffff"></div>
<div style="left:350px;top:428px;width:70px;height:16px;background:#ffffff"></div>
<div style="left:421px;top:428px;width:77px;height:16px;background:#ffffff"></div>
<div style="left:499px;top:428px;width:75px;height:16px;background:#ffffff"></div>
<div style="left:575px;top:428px;width:70px;height:16px;background:#ffffff"></div>
<div style="left:646px;top:428px;width:70px;height:16px;background:#ffffff"></div>
<div style="left:717px;top:428px;width:70px;height:16px;background:#ffffff"></div>
<div style="left:788px;top:428px;width:70px;height:16px;background:#ffffff"></div>
<div style="left:859px;top:428px;width:70px;height:16px;background:#ffffff"></div>
<div style="left:930px;top:428px;width:70px;height:16px;background:#ffffff"></div>
<div style="left:1001px;top:428px;width:70px;height:16px;background:#ffffff"></div>
<div style="left:1072px;top:428px;width:70px;height:16px;background:#ffffff"></div>
<div style="left:1143px;top:428px;width:70px;height:16px;background:#ffffff"></div>
<div style="left:1214px;top:428px;width:70px;height:16px;background:#ffffff"></div>
<div style="left:1285px;top:428px;width:83px;height:16px;background:#ffffff"></div>
<div style="left:1369px;top:428px;width:60px;height:16px;background:#ffffff"></div>
<div style="left:1430px;top:428px;width:76px;height:16px;background:#ccffcc"></div>
<div style="left:24px;top:445px;width:93px;height:16px;background:#ccffcc"></div>
<div style="left:118px;top:445px;width:75px;height:16px;background:#ffffff"></div>
<div style="left:194px;top:445px;width:84px;height:16px;background:#ffffff"></div>
<div style="left:279px;top:445px;width:70px;height:16px;background:#ffffff"></div>
<div style="left:350px;top:445px;width:70px;height:16px;background:#ffffff"></div>
<div style="left:421px;top:445px;width:77px;height:16px;background:#ffffff"></div>
<div style="left:499px;top:445px;width:75px;height:16px;background:#ffffff"></div>
<div style="left:575px;top:445px;width:70px;height:16px;background:#ffffff"></div>
<div style="left:646px;top:445px;width:70px;height:16px;background:#ffffff"></div>
<div style="left:717px;top:445px;width:70px;height:16px;background:#ffffff"></div>
<div style="left:788px;top:445px;width:70px;height:16px;background:#ffffff"></div>
<div style="left:859px;top:445px;width:70px;height:16px;background:#ffffff"></div>
<div style="left:930px;top:445px;width:70px;height:16px;background:#ffffff"></div>
<div style="left:1001px;top:445px;width:70px;height:16px;background:#ffffff"></div>
<div style="left:1072px;top:445px;width:70px;height:16px;background:#ffffff"></div>
<div style="left:1143px;top:445px;width:70px;height:16px;background:#ffffff"></div>
<div style="left:1214px;top:445px;width:70px;height:16px;background:#ffffff"></div>
<div style="left:1285px;top:445px;width:83px;height:16px;background:#ffffff"></div>
<div style="left:1369px;top:445px;width:60px;height:16px;background:#ffffff"></div>
<div style="left:1430px;top:445px;width:76px;height:16px;background:#ccffcc"></div>
<div style="left:24px;top:462px;width:93px;height:16px;background:#ccffcc"></div>
<div style="left:118px;top:462px;width:75px;height:16px;background:#ffffff"></div>
<div style="left:194px;top:462px;width:84px;height:16px;background:#ffffff"></div>
<div style="left:279px;top:462px;width:70px;height:16px;background:#ffffff"></div>
<div style="left:350px;top:462px;width:70px;height:16px;background:#ffffff"></div>
<div style="left:421px;top:462px;width:77px;height:16px;background:#ffffff"></div>
<div style="left:499px;top:462px;width:75px;height:16px;background:#ffffff"></div>
<div style="left:575px;top:462px;width:70px;height:16px;background:#ffffff"></div>
<div style="left:646px;top:462px;width:70px;height:16px;background:#ffffff"></div>
<div style="left:717px;top:462px;width:70px;height:16px;background:#ffffff"></div>
<div style="left:788px;top:462px;width:70px;height:16px;background:#ffffff"></div>
<div style="left:859px;top:462px;width:70px;height:16px;background:#ffffff"></div>
<div style="left:930px;top:462px;width:70px;height:16px;background:#ffffff"></div>
<div style="left:1001px;top:462px;width:70px;height:16px;background:#ffffff"></div>
<div style="left:1072px;top:462px;width:70px;height:16px;background:#ffffff"></div>
<div style="left:1143px;top:462px;width:70px;height:16px;background:#ffffff"></div>
<div style="left:1214px;top:462px;width:70px;height:16px;background:#ffffff"></div>
<div style="left:1285px;top:462px;width:83px;height:16px;background:#ffffff"></div>
<div style="left:1369px;top:462px;width:60px;height:16px;background:#ffffff"></div>
<div style="left:1430px;top:462px;width:76px;height:16px;background:#ccffcc"></div>
<div style="left:24px;top:479px;width:93px;height:16px;background:#ccffcc"></div>
<div style="left:118px;top:479px;width:75px;height:16px;background:#ffffff"></div>
<div style="left:194px;top:479px;width:84px;height:16px;background:#ffffff"></div>
<div style="left:279px;top:479px;width:70px;height:16px;background:#ffffff"></div>
<div style="left:350px;top:479px;width:70px;height:16px;background:#ffffff"></div>
<div style="left:421px;top:479px;width:77px;height:16px;background:#ffffff"></div>
<div style="left:499px;top:479px;width:75px;height:16px;background:#ffffff"></div>
<div style="left:575px;top:479px;width:70px;height:16px;background:#ffffff"></div>
<div style="left:646px;top:479px;width:70px;height:16px;background:#ffffff"></div>
<div style="left:717px;top:479px;width:70px;height:16px;background:#ffffff"></div>
<div style="left:788px;top:479px;width:70px;height:16px;background:#ffffff"></div>
<div style="left:859px;top:479px;width:70px;height:16px;background:#ffffff"></div>
<div style="left:930px;top:479px;width:70px;height:16px;background:#ffffff"></div>
<div style="left:1001px;top:479px;width:70px;height:16px;background:#ffffff"></div>
<div style="left:1072px;top:479px;width:70px;height:16px;background:#ffffff"></div>
<div style="left:1143px;top:479px;width:70px;height:16px;background:#ffffff"></div>
<div style="left:1214px;top:479px;width:70px;height:16px;background:#ffffff"></div>
<div style="left:1285px;top:479px;width:83px;height:16px;background:#ffffff"></div>
<div style="left:1369px;top:479px;width:60px;height:16px;background:#ffffff"></div>
<div style="left:1430px;top:479px;width:76px;height:16px;background:#ccffcc"></div>
<div style="left:24px;top:496px;width:93px;height:16px;background:#ccffcc"></div>
<div style="left:118px;top:496px;width:75px;height:16px;background:#ffffff"></div>
<div style="left:194px;top:496px;width:84px;height:16px;background:#ffffff"></div>
<div style="left:279px;top:496px;width:70px;height:16px;background:#ffffff"></div>
<div style="left:350px;top:496px;width:70px;height:16px;background:#ffffff"></div>
<div style="left:421px;top:496px;width:77px;height:16px;background:#ffffff"></div>
<div style="left:499px;top:496px;width:75px;height:16px;background:#ffffff"></div>
<div style="left:575px;top:496px;width:70px;height:16px;background:#ffffff"></div>
<div style="left:646px;top:496px;width:70px;height:16px;background:#ffffff"></div>
<div style="left:717px;top:496px;width:70px;height:16px;background:#ffffff"></div>
<div style="left:788px;top:496px;width:70px;height:16px;background:#ffffff"></div>
<div style="left:859px;top:496px;width:70px;height:16px;background:#ffffff"></div>
<div style="left:930px;top:496px;width:70px;height:16px;background:#ffffff"></div>
<div style="left:1001px;top:496px;width:70px;height:16px;background:#ffffff"></div>
<div style="left:1072px;top:496px;width:70px;height:16px;background:#ffffff"></div>
<div style="left:1143px;top:496px;width:70px;height:16px;background:#ffffff"></div>
<div style="left:1214px;top:496px;width:70px;height:16px;background:#ffffff"></div>
<div style="left:1285px;top:496px;width:83px;height:16px;background:#ffffff"></div>
<div style="left:1369px;top:496px;width:60px;height:16px;background:#ffffff"></div>
<div style="left:1430px;top:496px;width:76px;height:16px;background:#ccffcc"></div>
<div style="left:24px;top:513px;width:93px;height:16px;background:#ccffcc"></div>
<div style="left:118px;top:513px;width:75px;height:16px;background:#ffffff"></div>
<div style="left:194px;top:513px;width:84px;height:16px;background:#ffffff"></div>
<div style="left:279px;top:513px;width:70px;height:16px;background:#ffffff"></div>
<div style="left:350px;top:513px;width:70px;height:16px;background:#ffffff"></div>
<div style="left:421px;top:513px;width:77px;height:16px;background:#ffffff"></div>
<div style="left:499px;top:513px;width:75px;height:16px;background:#ffffff"></div>
<div style="left:575px;top:513px;width:70px;height:16px;background:#ffffff"></div>
<div style="left:646px;top:513px;width:70px;height:16px;background:#ffffff"></div>
<div style="left:717px;top:513px;width:70px;height:16px;background:#ffffff"></div>
<div style="left:788px;top:513px;width:70px;height:16px;background:#ffffff"></div>
<div style="left:859px;top:513px;width:70px;height:16px;background:#ffffff"></div>
<div style="left:930px;top:513px;width:70px;height:16px;background:#ffffff"></div>
<div style="left:1001px;top:513px;width:70px;height:16px;background:#ffffff"></div>
<div style="left:1072px;top:513px;width:70px;height:16px;background:#ffffff"></div>
<div style="left:1143px;top:513px;width:70px;height:16px;background:#ffffff"></div>
<div style="left:1214px;top:513px;width:70px;height:16px;background:#ffffff"></div>
<div style="left:1285px;top:513px;width:83px;height:16px;background:#ffffff"></div>
<div style="left:1369px;top:513px;width:60px;height:16px;background:#ffffff"></div>
<div style="left:1430px;top:513px;width:76px;height:16px;background:#ccffcc"></div>
<div style="left:24px;top:530px;width:93px;height:16px;background:#ccffcc"></div>
<div style="left:118px;top:530px;width:75px;height:16px;background:#ffffff"></div>
<div style="left:194px;top:530px;width:84px;height:16px;background:#ffffff"></div>
<div style="left:279px;top:530px;width:70px;height:16px;background:#ffffff"></div>
<div style="left:350px;top:530px;width:70px;height:16px;background:#ffffff"></div>
<div style="left:421px;top:530px;width:77px;height:16px;background:#ffffff"></div>
<div style="left:499px;top:530px;width:75px;height:16px;background:#ffffff"></div>
<div style="left:575px;top:530px;width:70px;height:16px;background:#ffffff"></div>
<div style="left:646px;top:530px;width:70px;height:16px;background:#ffffff"></div>
<div style="left:717px;top:530px;width:70px;height:16px;background:#ffffff"></div>
<div style="left:788px;top:530px;width:70px;height:16px;background:#ffffff"></div>
<div style="left:859px;top:530px;width:70px;height:16px;background:#ffffff"></div>
<div style="left:930px;top:530px;width:70px;height:16px;background:#ffffff"></div>
<div style="left:1001px;top:530px;width:70px;height:16px;background:#ffffff"></div>
<div style="left:1072px;top:530px;width:70px;height:16px;background:#ffffff"></div>
<div style="left:1143px;top:530px;width:70px;height:16px;background:#ffffff"></div>
<div style="left:1214px;top:530px;width:70px;height:16px;background:#ffffff"></div>
<div style="left:1285px;top:530px;width:83px;height:16px;background:#ffffff"></div>
<div style="left:1369px;top:530px;width:60px;height:16px;background:#ffffff"></div>
<div style="left:1430px;top:530px;width:76px;height:16px;background:#ccffcc"></div>
<div style="left:24px;top:547px;width:93px;height:16px;background:#ccffcc"></div>
<div style="left:118px;top:547px;width:75px;height:16px;background:#ffffff"></div>
<div style="left:194px;top:547px;width:84px;height:16px;background:#ffffff"></div>
<div style="left:279px;top:547px;width:70px;height:16px;background:#ffffff"></div>
<div style="left:350px;top:547px;width:70px;height:16px;background:#ffffff"></div>
<div style="left:421px;top:547px;width:77px;height:16px;background:#ffffff"></div>
<div style="left:499px;top:547px;width:75px;height:16px;background:#ffffff"></div>
<div style="left:575px;top:547px;width:70px;height:16px;background:#ffffff"></div>
<div style="left:646px;top:547px;width:70px;height:16px;background:#ffffff"></div>
<div style="left:717px;top:547px;width:70px;height:16px;background:#ffffff"></div>
<div style="left:788px;top:547px;width:70px;height:16px;background:#ffffff"></div>
<div style="left:859px;top:547px;width:70px;height:16px;background:#ffffff"></div>
<div style="left:930px;top:547px;width:70px;height:16px;background:#ffffff"></div>
<div style="left:1001px;top:547px;width:70px;height:16px;background:#ffffff"></div>
<div style="left:1072px;top:547px;width:70px;height:16px;background:#ffffff"></div>
<div style="left:1143px;top:547px;width:70px;height:16px;background:#ffffff"></div>
<div style="left:1214px;top:547px;width:70px;height:16px;background:#ffffff"></div>
<div style="left:1285px;top:547px;width:83px;height:16px;background:#ffffff"></div>
<div style="left:1369px;top:547px;width:60px;height:16px;background:#ffffff"></div>
<div style="left:1430px;top:547px;width:76px;height:16px;background:#ccffcc"></div>
<div style="left:24px;top:564px;width:93px;height:16px;background:#ccffcc"></div>
<div style="left:118px;top:564px;width:75px;height:16px;background:#ffffff"></div>
<div style="left:194px;top:564px;width:84px;height:16px;background:#ffffff"></div>
<div style="left:279px;top:564px;width:70px;height:16px;background:#ffffff"></div>
<div style="left:350px;top:564px;width:70px;height:16px;background:#ffffff"></div>
<div style="left:421px;top:564px;width:77px;height:16px;background:#ffffff"></div>
<div style="left:499px;top:564px;width:75px;height:16px;background:#ffffff"></div>
<div style="left:575px;top:564px;width:70px;height:16px;background:#ffffff"></div>
<div style="left:646px;top:564px;width:70px;height:16px;background:#ffffff"></div>
<div style="left:717px;top:564px;width:70px;height:16px;background:#ffffff"></div>
<div style="left:788px;top:564px;width:70px;height:16px;background:#ffffff"></div>
<div style="left:859px;top:564px;width:70px;height:16px;background:#ffffff"></div>
<div style="left:930px;top:564px;width:70px;height:16px;background:#ffffff"></div>
<div style="left:1001px;top:564px;width:70px;height:16px;background:#ffffff"></div>
<div style="left:1072px;top:564px;width:70px;height:16px;background:#ffffff"></div>
<div style="left:1143px;top:564px;width:70px;height:16px;background:#ffffff"></div>
<div style="left:1214px;top:564px;width:70px;height:16px;background:#ffffff"></div>
<div style="left:1285px;top:564px;width:83px;height:16px;background:#ffffff"></div>
<div style="left:1369px;top:564px;width:60px;height:16px;background:#ffffff"></div>
<div style="left:1430px;top:564px;width:76px;height:16px;background:#ccffcc"></div>
<div style="left:24px;top:581px;width:93px;height:16px;background:#ccffcc"></div>
<div style="left:118px;top:581px;width:75px;height:16px;background:#ffffff"></div>
<div style="left:194px;top:581px;width:84px;height:16px;background:#ffffff"></div>
<div style="left:279px;top:581px;width:70px;height:16px;background:#ffffff"></div>
<div style="left:350px;top:581px;width:70px;height:16px;background:#ffffff"></div>
<div style="left:421px;top:581px;width:77px;height:16px;background:#ffffff"></div>
<div style="left:499px;top:581px;width:75px;height:16px;background:#ffffff"></div>
<div style="left:575px;top:581px;width:70px;height:16px;background:#ffffff"></div>
<div style="left:646px;top:581px;width:70px;height:16px;background:#ffffff"></div>
<div style="left:717px;top:581px;width:70px;height:16px;background:#ffffff"></div>
<div style="left:788px;top:581px;width:70px;height:16px;background:#ffffff"></div>
<div style="left:859px;top:581px;width:70px;height:16px;background:#ffffff"></div>
<div style="left:930px;top:581px;width:70px;height:16px;background:#ffffff"></div>
<div style="left:1001px;top:581px;width:70px;height:16px;background:#ffffff"></div>
<div style="left:1072px;top:581px;width:70px;height:16px;background:#ffffff"></div>
<div style="left:1143px;top:581px;width:70px;height:16px;background:#ffffff"></div>
<div style="left:1214px;top:581px;width:70px;height:16px;background:#ffffff"></div>
<div style="left:1285px;top:581px;width:83px;height:16px;background:#ffffff"></div>
<div style="left:1369px;top:581px;width:60px;height:16px;background:#ffffff"></div>
<div style="left:1430px;top:581px;width:76px;height:16px;background:#ccffcc"></div>
<div style="left:24px;top:598px;width:93px;height:16px;background:#ccffcc"></div>
<div style="left:118px;top:598px;width:75px;height:16px;background:#ffffff"></div>
<div style="left:194px;top:598px;width:84px;height:16px;background:#ffffff"></div>
<div style="left:279px;top:598px;width:70px;height:16px;background:#ffffff"></div>
<div style="left:350px;top:598px;width:70px;height:16px;background:#ffffff"></div>
<div style="left:421px;top:598px;width:77px;height:16px;background:#ffffff"></div>
<div style="left:499px;top:598px;width:75px;height:16px;background:#ffffff"></div>
<div style="left:575px;top:598px;width:70px;height:16px;background:#ffffff"></div>
<div style="left:646px;top:598px;width:70px;height:16px;background:#ffffff"></div>
<div style="left:717px;top:598px;width:70px;height:16px;background:#ffffff"></div>
<div style="left:788px;top:598px;width:70px;height:16px;background:#ffffff"></div>
<div style="left:859px;top:598px;width:70px;height:16px;background:#ffffff"></div>
<div style="left:930px;top:598px;width:70px;height:16px;background:#ffffff"></div>
<div style="left:1001px;top:598px;width:70px;height:16px;background:#ffffff"></div>
<div style="left:1072px;top:598px;width:70px;height:16px;background:#ffffff"></div>
<div style="left:1143px;top:598px;width:70px;height:16px;background:#ffffff"></div>
<div style="left:1214px;top:598px;width:70px;height:16px;background:#ffffff"></div>
<div style="left:1285px;top:598px;width:83px;height:16px;background:#ffffff"></div>
<div style="left:1369px;top:598px;width:60px;height:16px;background:#ffffff"></div>
<div style="left:1430px;top:598px;width:76px;height:16px;background:#ccffcc"></div>
<div style="left:24px;top:615px;width:93px;height:16px;background:#ccffcc"></div>
<div style="left:118px;top:615px;width:75px;height:16px;background:#ffffff"></div>
<div style="left:194px;top:615px;width:84px;height:16px;background:#ffffff"></div>
<div style="left:279px;top:615px;width:70px;height:16px;background:#ffffff"></div>
<div style="left:350px;top:615px;width:70px;height:16px;background:#ffffff"></div>
<div style="left:421px;top:615px;width:77px;height:16px;background:#ffffff"></div>
<div style="left:499px;top:615px;width:75px;height:16px;background:#ffffff"></div>
<div style="left:575px;top:615px;width:70px;height:16px;background:#ffffff"></div>
<div style="left:646px;top:615px;width:70px;height:16px;background:#ffffff"></div>
<div style="left:717px;top:615px;width:70px;height:16px;background:#ffffff"></div>
<div style="left:788px;top:615px;width:70px;height:16px;background:#ffffff"></div>
<div style="left:859px;top:615px;width:70px;height:16px;background:#ffffff"></div>
<div style="left:930px;top:615px;width:70px;height:16px;background:#ffffff"></div>
<div style="left:1001px;top:615px;width:70px;height:16px;background:#ffffff"></div>
<div style="left:1072px;top:615px;width:70px;height:16px;background:#ffffff"></div>
<div style="left:1143px;top:615px;width:70px;height:16px;background:#ffffff"></div>
<div style="left:1214px;top:615px;width:70px;height:16px;background:#ffffff"></div>
<div style="left:1285px;top:615px;width:83px;height:16px;background:#ffffff"></div>
<div style="left:1369px;top:615px;width:60px;height:16px;background:#ffffff"></div>
<div style="left:1430px;top:615px;width:76px;height:16px;background:#ccffcc"></div>
<div style="left:24px;top:632px;width:93px;height:16px;background:#ccffcc"></div>
<div style="left:118px;top:632px;width:75px;height:16px;background:#ccffcc"></div>
<div style="left:194px;top:632px;width:84px;height:16px;background:#ccffcc"></div>
<div style="left:279px;top:632px;width:70px;height:16px;background:#ccffcc"></div>
<div style="left:350px;top:632px;width:70px;height:16px;background:#ccffcc"></div>
<div style="left:421px;top:632px;width:77px;height:16px;background:#ccffcc"></div>
<div style="left:499px;top:632px;width:75px;height:16px;background:#ccffcc"></div>
<div style="left:575px;top:632px;width:70px;height:16px;background:#ccffcc"></div>
<div style="left:646px;top:632px;width:70px;height:16px;background:#ccffcc"></div>
<div style="left:717px;top:632px;width:70px;height:16px;background:#ccffcc"></div>
<div style="left:788px;top:632px;width:70px;height:16px;background:#ccffcc"></div>
<div style="left:859px;top:632px;width:70px;height:16px;background:#ccffcc"></div>
<div style="left:930px;top:632px;width:70px;height:16px;background:#ccffcc"></div>
<div style="left:1001px;top:632px;width:70px;height:16px;background:#ccffcc"></div>
<div style="left:1072px;top:632px;width:70px;height:16px;background:#ccffcc"></div>
<div style="left:1143px;top:632px;width:70px;height:16px;background:#ccffcc"></div>
<div style="left:1214px;top:632px;width:70px;height:16px;background:#ccffcc"></div>
<div style="left:1285px;top:632px;width:83px;height:16px;background:#ccffcc"></div>
<div style="left:1369px;top:632px;width:60px;height:16px;background:#ccffcc"></div>
<div style="left:1430px;top:632px;width:76px;height:16px;background:#ccffcc"></div>
<div style="left:24px;top:400px;width:1482px;height:1px;background:#c0c0c0"></div>
<div style="left:24px;top:427px;width:1482px;height:1px;background:#c0c0c0"></div>
<div style="left:24px;top:444px;width:1482px;height:1px;background:#c0c0c0"></div>
<div style="left:24px;top:461px;width:1482px;height:1px;background:#c0c0c0"></div>
<div style="left:24px;top:478px;width:1482px;height:1px;background:#c0c0c0"></div>
<div style="left:24px;top:495px;width:1482px;height:1px;background:#c0c0c0"></div>
<div style="left:24px;top:512px;width:1482px;height:1px;background:#c0c0c0"></div>
<div style="left:24px;top:529px;width:1482px;height:1px;background:#c0c0c0"></div>
<div style="left:24px;top:546px;width:1482px;height:1px;background:#c0c0c0"></div>
<div style="left:24px;top:563px;width:1482px;height:1px;background:#c0c0c0"></div>
<div style="left:24px;top:580px;width:1482px;height:1px;background:#c0c0c0"></div>
<div style="left:24px;top:597px;width:1482px;height:1px;background:#c0c0c0"></div>
<div style="left:24px;top:614px;width:1482px;height:1px;background:#c0c0c0"></div>
<div style="left:24px;top:630px;width:1482px;height:1px;background:#c0c0c0"></div>
<div style="left:24px;top:632px;width:1482px;height:1px;background:#c0c0c0"></div>
<div style="left:24px;top:648px;width:1482px;height:1px;background:#c0c0c0"></div>
<div style="left:117px;top:400px;width:1px;height:249px;background:#c0c0c0"></div>
<div style="left:193px;top:400px;width:1px;height:249px;background:#c0c0c0"></div>
<div style="left:278px;top:400px;width:1px;height:249px;background:#c0c0c0"></div>
<div style="left:349px;top:400px;width:1px;height:249px;background:#c0c0c0"></div>
<div style="left:420px;top:400px;width:1px;height:249px;background:#c0c0c0"></div>
<div style="left:498px;top:400px;width:1px;height:249px;background:#c0c0c0"></div>
<div style="left:574px;top:400px;width:1px;height:249px;background:#c0c0c0"></div>
<div style="left:645px;top:400px;width:1px;height:249px;background:#c0c0c0"></div>
<div style="left:716px;top:400px;width:1px;height:249px;background:#c0c0c0"></div>
<div style="left:787px;top:400px;width:1px;height:249px;background:#c0c0c0"></div>
<div style="left:858px;top:400px;width:1px;height:249px;background:#c0c0c0"></div>
<div style="left:929px;top:400px;width:1px;height:249px;background:#c0c0c0"></div>
<div style="left:1000px;top:400px;width:1px;height:249px;background:#c0c0c0"></div>
<div style="left:1071px;top:400px;width:1px;height:249px;background:#c0c0c0"></div>
<div style="left:1142px;top:400px;width:1px;height:249px;background:#c0c0c0"></div>
<div style="left:1213px;top:400px;width:1px;height:249px;background:#c0c0c0"></div>
<div style="left:1284px;top:400px;width:1px;height:249px;background:#c0c0c0"></div>
<div style="left:1368px;top:400px;width:1px;height:249px;background:#c0c0c0"></div>
<div style="left:1429px;top:400px;width:1px;height:249px;background:#c0c0c0"></div>
<div class="t" style="left:24px;top:415px;width:91px;height:13px;line-height:13px;font-size:11px;text-align:right;color:#fff;font-weight:bold;letter-spacing:0.35px;">Month</div>
<div class="t" style="left:118px;top:415px;width:73px;height:13px;line-height:13px;font-size:11px;text-align:right;color:#fff;font-weight:bold;text-decoration:underline;letter-spacing:0.35px;">Banking</div>
<div class="t" style="left:194px;top:415px;width:82px;height:13px;line-height:13px;font-size:11px;text-align:right;color:#fff;font-weight:bold;text-decoration:underline;letter-spacing:0.35px;">Bills and Rates</div>
<div class="t" style="left:279px;top:415px;width:68px;height:13px;line-height:13px;font-size:11px;text-align:right;color:#fff;font-weight:bold;text-decoration:underline;letter-spacing:0.35px;">Children</div>
<div class="t" style="left:350px;top:415px;width:68px;height:13px;line-height:13px;font-size:11px;text-align:right;color:#fff;font-weight:bold;text-decoration:underline;letter-spacing:0.35px;">Clothing</div>
<div class="t" style="left:421px;top:415px;width:75px;height:13px;line-height:13px;font-size:11px;text-align:right;color:#fff;font-weight:bold;text-decoration:underline;letter-spacing:0.35px;">nt</div>
<div class="t" style="left:421px;top:401px;width:75px;height:13px;line-height:13px;font-size:11px;text-align:right;color:#fff;font-weight:bold;text-decoration:underline;letter-spacing:0.35px;">Entertainme</div>
<div class="t" style="left:499px;top:415px;width:73px;height:13px;line-height:13px;font-size:11px;text-align:right;color:#fff;font-weight:bold;text-decoration:underline;letter-spacing:0.35px;">Commitmen</div>
<div class="t" style="left:499px;top:401px;width:73px;height:13px;line-height:13px;font-size:11px;text-align:right;color:#fff;font-weight:bold;text-decoration:underline;letter-spacing:0.35px;">Financial</div>
<div class="t" style="left:575px;top:415px;width:68px;height:13px;line-height:13px;font-size:11px;text-align:right;color:#fff;font-weight:bold;text-decoration:underline;letter-spacing:0.35px;">Food</div>
<div class="t" style="left:646px;top:415px;width:68px;height:13px;line-height:13px;font-size:11px;text-align:right;color:#fff;font-weight:bold;text-decoration:underline;letter-spacing:0.35px;">General</div>
<div class="t" style="left:717px;top:415px;width:68px;height:13px;line-height:13px;font-size:11px;text-align:right;color:#fff;font-weight:bold;text-decoration:underline;letter-spacing:0.35px;">Grooming</div>
<div class="t" style="left:788px;top:415px;width:68px;height:13px;line-height:13px;font-size:11px;text-align:right;color:#fff;font-weight:bold;text-decoration:underline;letter-spacing:0.35px;">Holidays</div>
<div class="t" style="left:859px;top:415px;width:68px;height:13px;line-height:13px;font-size:11px;text-align:right;color:#fff;font-weight:bold;text-decoration:underline;letter-spacing:0.35px;">Home</div>
<div class="t" style="left:930px;top:415px;width:68px;height:13px;line-height:13px;font-size:11px;text-align:right;color:#fff;font-weight:bold;text-decoration:underline;letter-spacing:0.35px;">Insurance</div>
<div class="t" style="left:1001px;top:415px;width:68px;height:13px;line-height:13px;font-size:11px;text-align:right;color:#fff;font-weight:bold;text-decoration:underline;letter-spacing:0.35px;">Property</div>
<div class="t" style="left:1001px;top:401px;width:68px;height:13px;line-height:13px;font-size:11px;text-align:right;color:#fff;font-weight:bold;text-decoration:underline;letter-spacing:0.35px;">Investment</div>
<div class="t" style="left:1072px;top:415px;width:68px;height:13px;line-height:13px;font-size:11px;text-align:right;color:#fff;font-weight:bold;text-decoration:underline;letter-spacing:0.35px;">Medical</div>
<div class="t" style="left:1143px;top:415px;width:68px;height:13px;line-height:13px;font-size:11px;text-align:right;color:#fff;font-weight:bold;text-decoration:underline;letter-spacing:0.35px;">Pets</div>
<div class="t" style="left:1214px;top:415px;width:68px;height:13px;line-height:13px;font-size:11px;text-align:right;color:#fff;font-weight:bold;text-decoration:underline;letter-spacing:0.35px;">Recreation</div>
<div class="t" style="left:1285px;top:415px;width:81px;height:13px;line-height:13px;font-size:11px;text-align:right;color:#fff;font-weight:bold;text-decoration:underline;letter-spacing:0.35px;">Subscriptions</div>
<div class="t" style="left:1369px;top:415px;width:58px;height:13px;line-height:13px;font-size:11px;text-align:right;color:#fff;font-weight:bold;text-decoration:underline;letter-spacing:0.35px;">Transport</div>
<div class="t" style="left:1430px;top:415px;width:74px;height:13px;line-height:13px;font-size:11px;text-align:right;color:#fff;font-weight:bold;text-decoration:underline;letter-spacing:0.35px;">Total</div>
<div class="t" style="left:24px;top:432px;width:91px;height:13px;line-height:13px;font-size:11px;text-align:right;color:#000;font-weight:bold;letter-spacing:0.35px;">July</div>
<div class="t" style="left:118px;top:432px;width:73px;height:13px;line-height:13px;font-size:10.7px;text-align:right;color:#000;">$0.00</div>
<div class="t" style="left:194px;top:432px;width:82px;height:13px;line-height:13px;font-size:10.7px;text-align:right;color:#000;">$0.00</div>
<div class="t" style="left:279px;top:432px;width:68px;height:13px;line-height:13px;font-size:10.7px;text-align:right;color:#000;">$0.00</div>
<div class="t" style="left:350px;top:432px;width:68px;height:13px;line-height:13px;font-size:10.7px;text-align:right;color:#000;">$0.00</div>
<div class="t" style="left:421px;top:432px;width:75px;height:13px;line-height:13px;font-size:10.7px;text-align:right;color:#000;">$0.00</div>
<div class="t" style="left:499px;top:432px;width:73px;height:13px;line-height:13px;font-size:10.7px;text-align:right;color:#000;">$0.00</div>
<div class="t" style="left:575px;top:432px;width:68px;height:13px;line-height:13px;font-size:10.7px;text-align:right;color:#000;">$0.00</div>
<div class="t" style="left:646px;top:432px;width:68px;height:13px;line-height:13px;font-size:10.7px;text-align:right;color:#000;">$0.00</div>
<div class="t" style="left:717px;top:432px;width:68px;height:13px;line-height:13px;font-size:10.7px;text-align:right;color:#000;">$0.00</div>
<div class="t" style="left:788px;top:432px;width:68px;height:13px;line-height:13px;font-size:10.7px;text-align:right;color:#000;">$0.00</div>
<div class="t" style="left:859px;top:432px;width:68px;height:13px;line-height:13px;font-size:10.7px;text-align:right;color:#000;">$0.00</div>
<div class="t" style="left:930px;top:432px;width:68px;height:13px;line-height:13px;font-size:10.7px;text-align:right;color:#000;">$0.00</div>
<div class="t" style="left:1001px;top:432px;width:68px;height:13px;line-height:13px;font-size:10.7px;text-align:right;color:#000;">$0.00</div>
<div class="t" style="left:1072px;top:432px;width:68px;height:13px;line-height:13px;font-size:10.7px;text-align:right;color:#000;">$0.00</div>
<div class="t" style="left:1143px;top:432px;width:68px;height:13px;line-height:13px;font-size:10.7px;text-align:right;color:#000;">$0.00</div>
<div class="t" style="left:1214px;top:432px;width:68px;height:13px;line-height:13px;font-size:10.7px;text-align:right;color:#000;">$0.00</div>
<div class="t" style="left:1285px;top:432px;width:81px;height:13px;line-height:13px;font-size:10.7px;text-align:right;color:#000;">$0.00</div>
<div class="t" style="left:1369px;top:432px;width:58px;height:13px;line-height:13px;font-size:10.7px;text-align:right;color:#000;">$0.00</div>
<div class="t" style="left:1430px;top:432px;width:74px;height:13px;line-height:13px;font-size:10.7px;text-align:right;color:#000;">$0.00</div>
<div class="t" style="left:24px;top:449px;width:91px;height:13px;line-height:13px;font-size:11px;text-align:right;color:#000;font-weight:bold;letter-spacing:0.35px;">August</div>
<div class="t" style="left:118px;top:449px;width:73px;height:13px;line-height:13px;font-size:10.7px;text-align:right;color:#000;">$0.00</div>
<div class="t" style="left:194px;top:449px;width:82px;height:13px;line-height:13px;font-size:10.7px;text-align:right;color:#000;">$0.00</div>
<div class="t" style="left:279px;top:449px;width:68px;height:13px;line-height:13px;font-size:10.7px;text-align:right;color:#000;">$0.00</div>
<div class="t" style="left:350px;top:449px;width:68px;height:13px;line-height:13px;font-size:10.7px;text-align:right;color:#000;">$0.00</div>
<div class="t" style="left:421px;top:449px;width:75px;height:13px;line-height:13px;font-size:10.7px;text-align:right;color:#000;">$0.00</div>
<div class="t" style="left:499px;top:449px;width:73px;height:13px;line-height:13px;font-size:10.7px;text-align:right;color:#000;">$0.00</div>
<div class="t" style="left:575px;top:449px;width:68px;height:13px;line-height:13px;font-size:10.7px;text-align:right;color:#000;">$0.00</div>
<div class="t" style="left:646px;top:449px;width:68px;height:13px;line-height:13px;font-size:10.7px;text-align:right;color:#000;">$0.00</div>
<div class="t" style="left:717px;top:449px;width:68px;height:13px;line-height:13px;font-size:10.7px;text-align:right;color:#000;">$0.00</div>
<div class="t" style="left:788px;top:449px;width:68px;height:13px;line-height:13px;font-size:10.7px;text-align:right;color:#000;">$0.00</div>
<div class="t" style="left:859px;top:449px;width:68px;height:13px;line-height:13px;font-size:10.7px;text-align:right;color:#000;">$0.00</div>
<div class="t" style="left:930px;top:449px;width:68px;height:13px;line-height:13px;font-size:10.7px;text-align:right;color:#000;">$0.00</div>
<div class="t" style="left:1001px;top:449px;width:68px;height:13px;line-height:13px;font-size:10.7px;text-align:right;color:#000;">$0.00</div>
<div class="t" style="left:1072px;top:449px;width:68px;height:13px;line-height:13px;font-size:10.7px;text-align:right;color:#000;">$0.00</div>
<div class="t" style="left:1143px;top:449px;width:68px;height:13px;line-height:13px;font-size:10.7px;text-align:right;color:#000;">$0.00</div>
<div class="t" style="left:1214px;top:449px;width:68px;height:13px;line-height:13px;font-size:10.7px;text-align:right;color:#000;">$0.00</div>
<div class="t" style="left:1285px;top:449px;width:81px;height:13px;line-height:13px;font-size:10.7px;text-align:right;color:#000;">$0.00</div>
<div class="t" style="left:1369px;top:449px;width:58px;height:13px;line-height:13px;font-size:10.7px;text-align:right;color:#000;">$0.00</div>
<div class="t" style="left:1430px;top:449px;width:74px;height:13px;line-height:13px;font-size:10.7px;text-align:right;color:#000;">$0.00</div>
<div class="t" style="left:24px;top:466px;width:91px;height:13px;line-height:13px;font-size:11px;text-align:right;color:#000;font-weight:bold;letter-spacing:0.35px;">September</div>
<div class="t" style="left:118px;top:466px;width:73px;height:13px;line-height:13px;font-size:10.7px;text-align:right;color:#000;">$0.00</div>
<div class="t" style="left:194px;top:466px;width:82px;height:13px;line-height:13px;font-size:10.7px;text-align:right;color:#000;">$0.00</div>
<div class="t" style="left:279px;top:466px;width:68px;height:13px;line-height:13px;font-size:10.7px;text-align:right;color:#000;">$0.00</div>
<div class="t" style="left:350px;top:466px;width:68px;height:13px;line-height:13px;font-size:10.7px;text-align:right;color:#000;">$0.00</div>
<div class="t" style="left:421px;top:466px;width:75px;height:13px;line-height:13px;font-size:10.7px;text-align:right;color:#000;">$0.00</div>
<div class="t" style="left:499px;top:466px;width:73px;height:13px;line-height:13px;font-size:10.7px;text-align:right;color:#000;">$0.00</div>
<div class="t" style="left:575px;top:466px;width:68px;height:13px;line-height:13px;font-size:10.7px;text-align:right;color:#000;">$0.00</div>
<div class="t" style="left:646px;top:466px;width:68px;height:13px;line-height:13px;font-size:10.7px;text-align:right;color:#000;">$0.00</div>
<div class="t" style="left:717px;top:466px;width:68px;height:13px;line-height:13px;font-size:10.7px;text-align:right;color:#000;">$0.00</div>
<div class="t" style="left:788px;top:466px;width:68px;height:13px;line-height:13px;font-size:10.7px;text-align:right;color:#000;">$0.00</div>
<div class="t" style="left:859px;top:466px;width:68px;height:13px;line-height:13px;font-size:10.7px;text-align:right;color:#000;">$0.00</div>
<div class="t" style="left:930px;top:466px;width:68px;height:13px;line-height:13px;font-size:10.7px;text-align:right;color:#000;">$0.00</div>
<div class="t" style="left:1001px;top:466px;width:68px;height:13px;line-height:13px;font-size:10.7px;text-align:right;color:#000;">$0.00</div>
<div class="t" style="left:1072px;top:466px;width:68px;height:13px;line-height:13px;font-size:10.7px;text-align:right;color:#000;">$0.00</div>
<div class="t" style="left:1143px;top:466px;width:68px;height:13px;line-height:13px;font-size:10.7px;text-align:right;color:#000;">$0.00</div>
<div class="t" style="left:1214px;top:466px;width:68px;height:13px;line-height:13px;font-size:10.7px;text-align:right;color:#000;">$0.00</div>
<div class="t" style="left:1285px;top:466px;width:81px;height:13px;line-height:13px;font-size:10.7px;text-align:right;color:#000;">$0.00</div>
<div class="t" style="left:1369px;top:466px;width:58px;height:13px;line-height:13px;font-size:10.7px;text-align:right;color:#000;">$0.00</div>
<div class="t" style="left:1430px;top:466px;width:74px;height:13px;line-height:13px;font-size:10.7px;text-align:right;color:#000;">$0.00</div>
<div class="t" style="left:24px;top:483px;width:91px;height:13px;line-height:13px;font-size:11px;text-align:right;color:#000;font-weight:bold;letter-spacing:0.35px;">October</div>
<div class="t" style="left:118px;top:483px;width:73px;height:13px;line-height:13px;font-size:10.7px;text-align:right;color:#000;">$0.00</div>
<div class="t" style="left:194px;top:483px;width:82px;height:13px;line-height:13px;font-size:10.7px;text-align:right;color:#000;">$0.00</div>
<div class="t" style="left:279px;top:483px;width:68px;height:13px;line-height:13px;font-size:10.7px;text-align:right;color:#000;">$0.00</div>
<div class="t" style="left:350px;top:483px;width:68px;height:13px;line-height:13px;font-size:10.7px;text-align:right;color:#000;">$0.00</div>
<div class="t" style="left:421px;top:483px;width:75px;height:13px;line-height:13px;font-size:10.7px;text-align:right;color:#000;">$0.00</div>
<div class="t" style="left:499px;top:483px;width:73px;height:13px;line-height:13px;font-size:10.7px;text-align:right;color:#000;">$0.00</div>
<div class="t" style="left:575px;top:483px;width:68px;height:13px;line-height:13px;font-size:10.7px;text-align:right;color:#000;">$0.00</div>
<div class="t" style="left:646px;top:483px;width:68px;height:13px;line-height:13px;font-size:10.7px;text-align:right;color:#000;">$0.00</div>
<div class="t" style="left:717px;top:483px;width:68px;height:13px;line-height:13px;font-size:10.7px;text-align:right;color:#000;">$0.00</div>
<div class="t" style="left:788px;top:483px;width:68px;height:13px;line-height:13px;font-size:10.7px;text-align:right;color:#000;">$0.00</div>
<div class="t" style="left:859px;top:483px;width:68px;height:13px;line-height:13px;font-size:10.7px;text-align:right;color:#000;">$0.00</div>
<div class="t" style="left:930px;top:483px;width:68px;height:13px;line-height:13px;font-size:10.7px;text-align:right;color:#000;">$0.00</div>
<div class="t" style="left:1001px;top:483px;width:68px;height:13px;line-height:13px;font-size:10.7px;text-align:right;color:#000;">$0.00</div>
<div class="t" style="left:1072px;top:483px;width:68px;height:13px;line-height:13px;font-size:10.7px;text-align:right;color:#000;">$0.00</div>
<div class="t" style="left:1143px;top:483px;width:68px;height:13px;line-height:13px;font-size:10.7px;text-align:right;color:#000;">$0.00</div>
<div class="t" style="left:1214px;top:483px;width:68px;height:13px;line-height:13px;font-size:10.7px;text-align:right;color:#000;">$0.00</div>
<div class="t" style="left:1285px;top:483px;width:81px;height:13px;line-height:13px;font-size:10.7px;text-align:right;color:#000;">$0.00</div>
<div class="t" style="left:1369px;top:483px;width:58px;height:13px;line-height:13px;font-size:10.7px;text-align:right;color:#000;">$0.00</div>
<div class="t" style="left:1430px;top:483px;width:74px;height:13px;line-height:13px;font-size:10.7px;text-align:right;color:#000;">$0.00</div>
<div class="t" style="left:24px;top:500px;width:91px;height:13px;line-height:13px;font-size:11px;text-align:right;color:#000;font-weight:bold;letter-spacing:0.35px;">November</div>
<div class="t" style="left:118px;top:500px;width:73px;height:13px;line-height:13px;font-size:10.7px;text-align:right;color:#000;">$0.00</div>
<div class="t" style="left:194px;top:500px;width:82px;height:13px;line-height:13px;font-size:10.7px;text-align:right;color:#000;">$0.00</div>
<div class="t" style="left:279px;top:500px;width:68px;height:13px;line-height:13px;font-size:10.7px;text-align:right;color:#000;">$0.00</div>
<div class="t" style="left:350px;top:500px;width:68px;height:13px;line-height:13px;font-size:10.7px;text-align:right;color:#000;">$0.00</div>
<div class="t" style="left:421px;top:500px;width:75px;height:13px;line-height:13px;font-size:10.7px;text-align:right;color:#000;">$0.00</div>
<div class="t" style="left:499px;top:500px;width:73px;height:13px;line-height:13px;font-size:10.7px;text-align:right;color:#000;">$0.00</div>
<div class="t" style="left:575px;top:500px;width:68px;height:13px;line-height:13px;font-size:10.7px;text-align:right;color:#000;">$0.00</div>
<div class="t" style="left:646px;top:500px;width:68px;height:13px;line-height:13px;font-size:10.7px;text-align:right;color:#000;">$0.00</div>
<div class="t" style="left:717px;top:500px;width:68px;height:13px;line-height:13px;font-size:10.7px;text-align:right;color:#000;">$0.00</div>
<div class="t" style="left:788px;top:500px;width:68px;height:13px;line-height:13px;font-size:10.7px;text-align:right;color:#000;">$0.00</div>
<div class="t" style="left:859px;top:500px;width:68px;height:13px;line-height:13px;font-size:10.7px;text-align:right;color:#000;">$0.00</div>
<div class="t" style="left:930px;top:500px;width:68px;height:13px;line-height:13px;font-size:10.7px;text-align:right;color:#000;">$0.00</div>
<div class="t" style="left:1001px;top:500px;width:68px;height:13px;line-height:13px;font-size:10.7px;text-align:right;color:#000;">$0.00</div>
<div class="t" style="left:1072px;top:500px;width:68px;height:13px;line-height:13px;font-size:10.7px;text-align:right;color:#000;">$0.00</div>
<div class="t" style="left:1143px;top:500px;width:68px;height:13px;line-height:13px;font-size:10.7px;text-align:right;color:#000;">$0.00</div>
<div class="t" style="left:1214px;top:500px;width:68px;height:13px;line-height:13px;font-size:10.7px;text-align:right;color:#000;">$0.00</div>
<div class="t" style="left:1285px;top:500px;width:81px;height:13px;line-height:13px;font-size:10.7px;text-align:right;color:#000;">$0.00</div>
<div class="t" style="left:1369px;top:500px;width:58px;height:13px;line-height:13px;font-size:10.7px;text-align:right;color:#000;">$0.00</div>
<div class="t" style="left:1430px;top:500px;width:74px;height:13px;line-height:13px;font-size:10.7px;text-align:right;color:#000;">$0.00</div>
<div class="t" style="left:24px;top:517px;width:91px;height:13px;line-height:13px;font-size:11px;text-align:right;color:#000;font-weight:bold;letter-spacing:0.35px;">December</div>
<div class="t" style="left:118px;top:517px;width:73px;height:13px;line-height:13px;font-size:10.7px;text-align:right;color:#000;">$0.00</div>
<div class="t" style="left:194px;top:517px;width:82px;height:13px;line-height:13px;font-size:10.7px;text-align:right;color:#000;">$0.00</div>
<div class="t" style="left:279px;top:517px;width:68px;height:13px;line-height:13px;font-size:10.7px;text-align:right;color:#000;">$0.00</div>
<div class="t" style="left:350px;top:517px;width:68px;height:13px;line-height:13px;font-size:10.7px;text-align:right;color:#000;">$0.00</div>
<div class="t" style="left:421px;top:517px;width:75px;height:13px;line-height:13px;font-size:10.7px;text-align:right;color:#000;">$0.00</div>
<div class="t" style="left:499px;top:517px;width:73px;height:13px;line-height:13px;font-size:10.7px;text-align:right;color:#000;">$0.00</div>
<div class="t" style="left:575px;top:517px;width:68px;height:13px;line-height:13px;font-size:10.7px;text-align:right;color:#000;">$0.00</div>
<div class="t" style="left:646px;top:517px;width:68px;height:13px;line-height:13px;font-size:10.7px;text-align:right;color:#000;">$0.00</div>
<div class="t" style="left:717px;top:517px;width:68px;height:13px;line-height:13px;font-size:10.7px;text-align:right;color:#000;">$0.00</div>
<div class="t" style="left:788px;top:517px;width:68px;height:13px;line-height:13px;font-size:10.7px;text-align:right;color:#000;">$0.00</div>
<div class="t" style="left:859px;top:517px;width:68px;height:13px;line-height:13px;font-size:10.7px;text-align:right;color:#000;">$0.00</div>
<div class="t" style="left:930px;top:517px;width:68px;height:13px;line-height:13px;font-size:10.7px;text-align:right;color:#000;">$0.00</div>
<div class="t" style="left:1001px;top:517px;width:68px;height:13px;line-height:13px;font-size:10.7px;text-align:right;color:#000;">$0.00</div>
<div class="t" style="left:1072px;top:517px;width:68px;height:13px;line-height:13px;font-size:10.7px;text-align:right;color:#000;">$0.00</div>
<div class="t" style="left:1143px;top:517px;width:68px;height:13px;line-height:13px;font-size:10.7px;text-align:right;color:#000;">$0.00</div>
<div class="t" style="left:1214px;top:517px;width:68px;height:13px;line-height:13px;font-size:10.7px;text-align:right;color:#000;">$0.00</div>
<div class="t" style="left:1285px;top:517px;width:81px;height:13px;line-height:13px;font-size:10.7px;text-align:right;color:#000;">$0.00</div>
<div class="t" style="left:1369px;top:517px;width:58px;height:13px;line-height:13px;font-size:10.7px;text-align:right;color:#000;">$0.00</div>
<div class="t" style="left:1430px;top:517px;width:74px;height:13px;line-height:13px;font-size:10.7px;text-align:right;color:#000;">$0.00</div>
<div class="t" style="left:24px;top:534px;width:91px;height:13px;line-height:13px;font-size:11px;text-align:right;color:#000;font-weight:bold;letter-spacing:0.35px;">January</div>
<div class="t" style="left:118px;top:534px;width:73px;height:13px;line-height:13px;font-size:10.7px;text-align:right;color:#000;">$0.00</div>
<div class="t" style="left:194px;top:534px;width:82px;height:13px;line-height:13px;font-size:10.7px;text-align:right;color:#000;">$0.00</div>
<div class="t" style="left:279px;top:534px;width:68px;height:13px;line-height:13px;font-size:10.7px;text-align:right;color:#000;">$0.00</div>
<div class="t" style="left:350px;top:534px;width:68px;height:13px;line-height:13px;font-size:10.7px;text-align:right;color:#000;">$0.00</div>
<div class="t" style="left:421px;top:534px;width:75px;height:13px;line-height:13px;font-size:10.7px;text-align:right;color:#000;">$0.00</div>
<div class="t" style="left:499px;top:534px;width:73px;height:13px;line-height:13px;font-size:10.7px;text-align:right;color:#000;">$0.00</div>
<div class="t" style="left:575px;top:534px;width:68px;height:13px;line-height:13px;font-size:10.7px;text-align:right;color:#000;">$0.00</div>
<div class="t" style="left:646px;top:534px;width:68px;height:13px;line-height:13px;font-size:10.7px;text-align:right;color:#000;">$0.00</div>
<div class="t" style="left:717px;top:534px;width:68px;height:13px;line-height:13px;font-size:10.7px;text-align:right;color:#000;">$0.00</div>
<div class="t" style="left:788px;top:534px;width:68px;height:13px;line-height:13px;font-size:10.7px;text-align:right;color:#000;">$0.00</div>
<div class="t" style="left:859px;top:534px;width:68px;height:13px;line-height:13px;font-size:10.7px;text-align:right;color:#000;">$0.00</div>
<div class="t" style="left:930px;top:534px;width:68px;height:13px;line-height:13px;font-size:10.7px;text-align:right;color:#000;">$0.00</div>
<div class="t" style="left:1001px;top:534px;width:68px;height:13px;line-height:13px;font-size:10.7px;text-align:right;color:#000;">$0.00</div>
<div class="t" style="left:1072px;top:534px;width:68px;height:13px;line-height:13px;font-size:10.7px;text-align:right;color:#000;">$0.00</div>
<div class="t" style="left:1143px;top:534px;width:68px;height:13px;line-height:13px;font-size:10.7px;text-align:right;color:#000;">$0.00</div>
<div class="t" style="left:1214px;top:534px;width:68px;height:13px;line-height:13px;font-size:10.7px;text-align:right;color:#000;">$0.00</div>
<div class="t" style="left:1285px;top:534px;width:81px;height:13px;line-height:13px;font-size:10.7px;text-align:right;color:#000;">$0.00</div>
<div class="t" style="left:1369px;top:534px;width:58px;height:13px;line-height:13px;font-size:10.7px;text-align:right;color:#000;">$0.00</div>
<div class="t" style="left:1430px;top:534px;width:74px;height:13px;line-height:13px;font-size:10.7px;text-align:right;color:#000;">$0.00</div>
<div class="t" style="left:24px;top:551px;width:91px;height:13px;line-height:13px;font-size:11px;text-align:right;color:#000;font-weight:bold;letter-spacing:0.35px;">February</div>
<div class="t" style="left:118px;top:551px;width:73px;height:13px;line-height:13px;font-size:10.7px;text-align:right;color:#000;">$0.00</div>
<div class="t" style="left:194px;top:551px;width:82px;height:13px;line-height:13px;font-size:10.7px;text-align:right;color:#000;">$0.00</div>
<div class="t" style="left:279px;top:551px;width:68px;height:13px;line-height:13px;font-size:10.7px;text-align:right;color:#000;">$0.00</div>
<div class="t" style="left:350px;top:551px;width:68px;height:13px;line-height:13px;font-size:10.7px;text-align:right;color:#000;">$0.00</div>
<div class="t" style="left:421px;top:551px;width:75px;height:13px;line-height:13px;font-size:10.7px;text-align:right;color:#000;">$0.00</div>
<div class="t" style="left:499px;top:551px;width:73px;height:13px;line-height:13px;font-size:10.7px;text-align:right;color:#000;">$0.00</div>
<div class="t" style="left:575px;top:551px;width:68px;height:13px;line-height:13px;font-size:10.7px;text-align:right;color:#000;">$0.00</div>
<div class="t" style="left:646px;top:551px;width:68px;height:13px;line-height:13px;font-size:10.7px;text-align:right;color:#000;">$0.00</div>
<div class="t" style="left:717px;top:551px;width:68px;height:13px;line-height:13px;font-size:10.7px;text-align:right;color:#000;">$0.00</div>
<div class="t" style="left:788px;top:551px;width:68px;height:13px;line-height:13px;font-size:10.7px;text-align:right;color:#000;">$0.00</div>
<div class="t" style="left:859px;top:551px;width:68px;height:13px;line-height:13px;font-size:10.7px;text-align:right;color:#000;">$0.00</div>
<div class="t" style="left:930px;top:551px;width:68px;height:13px;line-height:13px;font-size:10.7px;text-align:right;color:#000;">$0.00</div>
<div class="t" style="left:1001px;top:551px;width:68px;height:13px;line-height:13px;font-size:10.7px;text-align:right;color:#000;">$0.00</div>
<div class="t" style="left:1072px;top:551px;width:68px;height:13px;line-height:13px;font-size:10.7px;text-align:right;color:#000;">$0.00</div>
<div class="t" style="left:1143px;top:551px;width:68px;height:13px;line-height:13px;font-size:10.7px;text-align:right;color:#000;">$0.00</div>
<div class="t" style="left:1214px;top:551px;width:68px;height:13px;line-height:13px;font-size:10.7px;text-align:right;color:#000;">$0.00</div>
<div class="t" style="left:1285px;top:551px;width:81px;height:13px;line-height:13px;font-size:10.7px;text-align:right;color:#000;">$0.00</div>
<div class="t" style="left:1369px;top:551px;width:58px;height:13px;line-height:13px;font-size:10.7px;text-align:right;color:#000;">$0.00</div>
<div class="t" style="left:1430px;top:551px;width:74px;height:13px;line-height:13px;font-size:10.7px;text-align:right;color:#000;">$0.00</div>
<div class="t" style="left:24px;top:568px;width:91px;height:13px;line-height:13px;font-size:11px;text-align:right;color:#000;font-weight:bold;letter-spacing:0.35px;">March</div>
<div class="t" style="left:118px;top:568px;width:73px;height:13px;line-height:13px;font-size:10.7px;text-align:right;color:#000;">$0.00</div>
<div class="t" style="left:194px;top:568px;width:82px;height:13px;line-height:13px;font-size:10.7px;text-align:right;color:#000;">$0.00</div>
<div class="t" style="left:279px;top:568px;width:68px;height:13px;line-height:13px;font-size:10.7px;text-align:right;color:#000;">$0.00</div>
<div class="t" style="left:350px;top:568px;width:68px;height:13px;line-height:13px;font-size:10.7px;text-align:right;color:#000;">$0.00</div>
<div class="t" style="left:421px;top:568px;width:75px;height:13px;line-height:13px;font-size:10.7px;text-align:right;color:#000;">$0.00</div>
<div class="t" style="left:499px;top:568px;width:73px;height:13px;line-height:13px;font-size:10.7px;text-align:right;color:#000;">$0.00</div>
<div class="t" style="left:575px;top:568px;width:68px;height:13px;line-height:13px;font-size:10.7px;text-align:right;color:#000;">$0.00</div>
<div class="t" style="left:646px;top:568px;width:68px;height:13px;line-height:13px;font-size:10.7px;text-align:right;color:#000;">$0.00</div>
<div class="t" style="left:717px;top:568px;width:68px;height:13px;line-height:13px;font-size:10.7px;text-align:right;color:#000;">$0.00</div>
<div class="t" style="left:788px;top:568px;width:68px;height:13px;line-height:13px;font-size:10.7px;text-align:right;color:#000;">$0.00</div>
<div class="t" style="left:859px;top:568px;width:68px;height:13px;line-height:13px;font-size:10.7px;text-align:right;color:#000;">$0.00</div>
<div class="t" style="left:930px;top:568px;width:68px;height:13px;line-height:13px;font-size:10.7px;text-align:right;color:#000;">$0.00</div>
<div class="t" style="left:1001px;top:568px;width:68px;height:13px;line-height:13px;font-size:10.7px;text-align:right;color:#000;">$0.00</div>
<div class="t" style="left:1072px;top:568px;width:68px;height:13px;line-height:13px;font-size:10.7px;text-align:right;color:#000;">$0.00</div>
<div class="t" style="left:1143px;top:568px;width:68px;height:13px;line-height:13px;font-size:10.7px;text-align:right;color:#000;">$0.00</div>
<div class="t" style="left:1214px;top:568px;width:68px;height:13px;line-height:13px;font-size:10.7px;text-align:right;color:#000;">$0.00</div>
<div class="t" style="left:1285px;top:568px;width:81px;height:13px;line-height:13px;font-size:10.7px;text-align:right;color:#000;">$0.00</div>
<div class="t" style="left:1369px;top:568px;width:58px;height:13px;line-height:13px;font-size:10.7px;text-align:right;color:#000;">$0.00</div>
<div class="t" style="left:1430px;top:568px;width:74px;height:13px;line-height:13px;font-size:10.7px;text-align:right;color:#000;">$0.00</div>
<div class="t" style="left:24px;top:585px;width:91px;height:13px;line-height:13px;font-size:11px;text-align:right;color:#000;font-weight:bold;letter-spacing:0.35px;">April</div>
<div class="t" style="left:118px;top:585px;width:73px;height:13px;line-height:13px;font-size:10.7px;text-align:right;color:#000;">$0.00</div>
<div class="t" style="left:194px;top:585px;width:82px;height:13px;line-height:13px;font-size:10.7px;text-align:right;color:#000;">$0.00</div>
<div class="t" style="left:279px;top:585px;width:68px;height:13px;line-height:13px;font-size:10.7px;text-align:right;color:#000;">$0.00</div>
<div class="t" style="left:350px;top:585px;width:68px;height:13px;line-height:13px;font-size:10.7px;text-align:right;color:#000;">$0.00</div>
<div class="t" style="left:421px;top:585px;width:75px;height:13px;line-height:13px;font-size:10.7px;text-align:right;color:#000;">$0.00</div>
<div class="t" style="left:499px;top:585px;width:73px;height:13px;line-height:13px;font-size:10.7px;text-align:right;color:#000;">$0.00</div>
<div class="t" style="left:575px;top:585px;width:68px;height:13px;line-height:13px;font-size:10.7px;text-align:right;color:#000;">$0.00</div>
<div class="t" style="left:646px;top:585px;width:68px;height:13px;line-height:13px;font-size:10.7px;text-align:right;color:#000;">$0.00</div>
<div class="t" style="left:717px;top:585px;width:68px;height:13px;line-height:13px;font-size:10.7px;text-align:right;color:#000;">$0.00</div>
<div class="t" style="left:788px;top:585px;width:68px;height:13px;line-height:13px;font-size:10.7px;text-align:right;color:#000;">$0.00</div>
<div class="t" style="left:859px;top:585px;width:68px;height:13px;line-height:13px;font-size:10.7px;text-align:right;color:#000;">$0.00</div>
<div class="t" style="left:930px;top:585px;width:68px;height:13px;line-height:13px;font-size:10.7px;text-align:right;color:#000;">$0.00</div>
<div class="t" style="left:1001px;top:585px;width:68px;height:13px;line-height:13px;font-size:10.7px;text-align:right;color:#000;">$0.00</div>
<div class="t" style="left:1072px;top:585px;width:68px;height:13px;line-height:13px;font-size:10.7px;text-align:right;color:#000;">$0.00</div>
<div class="t" style="left:1143px;top:585px;width:68px;height:13px;line-height:13px;font-size:10.7px;text-align:right;color:#000;">$0.00</div>
<div class="t" style="left:1214px;top:585px;width:68px;height:13px;line-height:13px;font-size:10.7px;text-align:right;color:#000;">$0.00</div>
<div class="t" style="left:1285px;top:585px;width:81px;height:13px;line-height:13px;font-size:10.7px;text-align:right;color:#000;">$0.00</div>
<div class="t" style="left:1369px;top:585px;width:58px;height:13px;line-height:13px;font-size:10.7px;text-align:right;color:#000;">$0.00</div>
<div class="t" style="left:1430px;top:585px;width:74px;height:13px;line-height:13px;font-size:10.7px;text-align:right;color:#000;">$0.00</div>
<div class="t" style="left:24px;top:602px;width:91px;height:13px;line-height:13px;font-size:11px;text-align:right;color:#000;font-weight:bold;letter-spacing:0.35px;">May</div>
<div class="t" style="left:118px;top:602px;width:73px;height:13px;line-height:13px;font-size:10.7px;text-align:right;color:#000;">$0.00</div>
<div class="t" style="left:194px;top:602px;width:82px;height:13px;line-height:13px;font-size:10.7px;text-align:right;color:#000;">$0.00</div>
<div class="t" style="left:279px;top:602px;width:68px;height:13px;line-height:13px;font-size:10.7px;text-align:right;color:#000;">$0.00</div>
<div class="t" style="left:350px;top:602px;width:68px;height:13px;line-height:13px;font-size:10.7px;text-align:right;color:#000;">$0.00</div>
<div class="t" style="left:421px;top:602px;width:75px;height:13px;line-height:13px;font-size:10.7px;text-align:right;color:#000;">$0.00</div>
<div class="t" style="left:499px;top:602px;width:73px;height:13px;line-height:13px;font-size:10.7px;text-align:right;color:#000;">$0.00</div>
<div class="t" style="left:575px;top:602px;width:68px;height:13px;line-height:13px;font-size:10.7px;text-align:right;color:#000;">$0.00</div>
<div class="t" style="left:646px;top:602px;width:68px;height:13px;line-height:13px;font-size:10.7px;text-align:right;color:#000;">$0.00</div>
<div class="t" style="left:717px;top:602px;width:68px;height:13px;line-height:13px;font-size:10.7px;text-align:right;color:#000;">$0.00</div>
<div class="t" style="left:788px;top:602px;width:68px;height:13px;line-height:13px;font-size:10.7px;text-align:right;color:#000;">$0.00</div>
<div class="t" style="left:859px;top:602px;width:68px;height:13px;line-height:13px;font-size:10.7px;text-align:right;color:#000;">$0.00</div>
<div class="t" style="left:930px;top:602px;width:68px;height:13px;line-height:13px;font-size:10.7px;text-align:right;color:#000;">$0.00</div>
<div class="t" style="left:1001px;top:602px;width:68px;height:13px;line-height:13px;font-size:10.7px;text-align:right;color:#000;">$0.00</div>
<div class="t" style="left:1072px;top:602px;width:68px;height:13px;line-height:13px;font-size:10.7px;text-align:right;color:#000;">$0.00</div>
<div class="t" style="left:1143px;top:602px;width:68px;height:13px;line-height:13px;font-size:10.7px;text-align:right;color:#000;">$0.00</div>
<div class="t" style="left:1214px;top:602px;width:68px;height:13px;line-height:13px;font-size:10.7px;text-align:right;color:#000;">$0.00</div>
<div class="t" style="left:1285px;top:602px;width:81px;height:13px;line-height:13px;font-size:10.7px;text-align:right;color:#000;">$0.00</div>
<div class="t" style="left:1369px;top:602px;width:58px;height:13px;line-height:13px;font-size:10.7px;text-align:right;color:#000;">$0.00</div>
<div class="t" style="left:1430px;top:602px;width:74px;height:13px;line-height:13px;font-size:10.7px;text-align:right;color:#000;">$0.00</div>
<div class="t" style="left:24px;top:618px;width:91px;height:13px;line-height:13px;font-size:11px;text-align:right;color:#000;font-weight:bold;letter-spacing:0.35px;">June</div>
<div class="t" style="left:118px;top:618px;width:73px;height:13px;line-height:13px;font-size:10.7px;text-align:right;color:#000;">$0.00</div>
<div class="t" style="left:194px;top:618px;width:82px;height:13px;line-height:13px;font-size:10.7px;text-align:right;color:#000;">$0.00</div>
<div class="t" style="left:279px;top:618px;width:68px;height:13px;line-height:13px;font-size:10.7px;text-align:right;color:#000;">$0.00</div>
<div class="t" style="left:350px;top:618px;width:68px;height:13px;line-height:13px;font-size:10.7px;text-align:right;color:#000;">$0.00</div>
<div class="t" style="left:421px;top:618px;width:75px;height:13px;line-height:13px;font-size:10.7px;text-align:right;color:#000;">$0.00</div>
<div class="t" style="left:499px;top:618px;width:73px;height:13px;line-height:13px;font-size:10.7px;text-align:right;color:#000;">$0.00</div>
<div class="t" style="left:575px;top:618px;width:68px;height:13px;line-height:13px;font-size:10.7px;text-align:right;color:#000;">$0.00</div>
<div class="t" style="left:646px;top:618px;width:68px;height:13px;line-height:13px;font-size:10.7px;text-align:right;color:#000;">$0.00</div>
<div class="t" style="left:717px;top:618px;width:68px;height:13px;line-height:13px;font-size:10.7px;text-align:right;color:#000;">$0.00</div>
<div class="t" style="left:788px;top:618px;width:68px;height:13px;line-height:13px;font-size:10.7px;text-align:right;color:#000;">$0.00</div>
<div class="t" style="left:859px;top:618px;width:68px;height:13px;line-height:13px;font-size:10.7px;text-align:right;color:#000;">$0.00</div>
<div class="t" style="left:930px;top:618px;width:68px;height:13px;line-height:13px;font-size:10.7px;text-align:right;color:#000;">$0.00</div>
<div class="t" style="left:1001px;top:618px;width:68px;height:13px;line-height:13px;font-size:10.7px;text-align:right;color:#000;">$0.00</div>
<div class="t" style="left:1072px;top:618px;width:68px;height:13px;line-height:13px;font-size:10.7px;text-align:right;color:#000;">$0.00</div>
<div class="t" style="left:1143px;top:618px;width:68px;height:13px;line-height:13px;font-size:10.7px;text-align:right;color:#000;">$0.00</div>
<div class="t" style="left:1214px;top:618px;width:68px;height:13px;line-height:13px;font-size:10.7px;text-align:right;color:#000;">$0.00</div>
<div class="t" style="left:1285px;top:618px;width:81px;height:13px;line-height:13px;font-size:10.7px;text-align:right;color:#000;">$0.00</div>
<div class="t" style="left:1369px;top:618px;width:58px;height:13px;line-height:13px;font-size:10.7px;text-align:right;color:#000;">$0.00</div>
<div class="t" style="left:1430px;top:618px;width:74px;height:13px;line-height:13px;font-size:10.7px;text-align:right;color:#000;">$0.00</div>
<div class="t" style="left:24px;top:636px;width:91px;height:13px;line-height:13px;font-size:11px;text-align:right;color:#000;font-weight:bold;letter-spacing:0.35px;">Total</div>
<div class="t" style="left:118px;top:636px;width:73px;height:13px;line-height:13px;font-size:10.7px;text-align:right;color:#000;font-weight:bold;">$0.00</div>
<div class="t" style="left:194px;top:636px;width:82px;height:13px;line-height:13px;font-size:10.7px;text-align:right;color:#000;font-weight:bold;">$0.00</div>
<div class="t" style="left:279px;top:636px;width:68px;height:13px;line-height:13px;font-size:10.7px;text-align:right;color:#000;font-weight:bold;">$0.00</div>
<div class="t" style="left:350px;top:636px;width:68px;height:13px;line-height:13px;font-size:10.7px;text-align:right;color:#000;font-weight:bold;">$0.00</div>
<div class="t" style="left:421px;top:636px;width:75px;height:13px;line-height:13px;font-size:10.7px;text-align:right;color:#000;font-weight:bold;">$0.00</div>
<div class="t" style="left:499px;top:636px;width:73px;height:13px;line-height:13px;font-size:10.7px;text-align:right;color:#000;font-weight:bold;">$0.00</div>
<div class="t" style="left:575px;top:636px;width:68px;height:13px;line-height:13px;font-size:10.7px;text-align:right;color:#000;font-weight:bold;">$0.00</div>
<div class="t" style="left:646px;top:636px;width:68px;height:13px;line-height:13px;font-size:10.7px;text-align:right;color:#000;font-weight:bold;">$0.00</div>
<div class="t" style="left:717px;top:636px;width:68px;height:13px;line-height:13px;font-size:10.7px;text-align:right;color:#000;font-weight:bold;">$0.00</div>
<div class="t" style="left:788px;top:636px;width:68px;height:13px;line-height:13px;font-size:10.7px;text-align:right;color:#000;font-weight:bold;">$0.00</div>
<div class="t" style="left:859px;top:636px;width:68px;height:13px;line-height:13px;font-size:10.7px;text-align:right;color:#000;font-weight:bold;">$0.00</div>
<div class="t" style="left:930px;top:636px;width:68px;height:13px;line-height:13px;font-size:10.7px;text-align:right;color:#000;font-weight:bold;">$0.00</div>
<div class="t" style="left:1001px;top:636px;width:68px;height:13px;line-height:13px;font-size:10.7px;text-align:right;color:#000;font-weight:bold;">$0.00</div>
<div class="t" style="left:1072px;top:636px;width:68px;height:13px;line-height:13px;font-size:10.7px;text-align:right;color:#000;font-weight:bold;">$0.00</div>
<div class="t" style="left:1143px;top:636px;width:68px;height:13px;line-height:13px;font-size:10.7px;text-align:right;color:#000;font-weight:bold;">$0.00</div>
<div class="t" style="left:1214px;top:636px;width:68px;height:13px;line-height:13px;font-size:10.7px;text-align:right;color:#000;font-weight:bold;">$0.00</div>
<div class="t" style="left:1285px;top:636px;width:81px;height:13px;line-height:13px;font-size:10.7px;text-align:right;color:#000;font-weight:bold;">$0.00</div>
<div class="t" style="left:1369px;top:636px;width:58px;height:13px;line-height:13px;font-size:10.7px;text-align:right;color:#000;font-weight:bold;">$0.00</div>
<div class="t" style="left:1430px;top:636px;width:74px;height:13px;line-height:13px;font-size:10.7px;text-align:right;color:#000;font-weight:bold;">$0.00</div>
<div style="left:0px;top:649px;width:1506px;height:9px;background:linear-gradient(rgba(35,55,90,0.75),rgba(35,55,90,0.35) 40%,rgba(35,55,90,0))"></div>
<div style="left:1506px;top:649px;width:9px;height:9px;background:linear-gradient(rgba(35,55,90,0.45),rgba(35,55,90,0))"></div>
<div style="left:0px;top:786px;width:1515px;height:1px;background:#a9c0e0"></div>
<div style="left:0px;top:787px;width:1515px;height:15px;background:linear-gradient(#fbfdff 0px,#e6eef9 2px,#dbe6f6 7px,#c2d4ee 9px,#c6d7ef 12px,#dbe6f5 14px,#ffffff 15px)"></div>
<div style="left:0px;top:802px;width:1515px;height:1px;background:#f4f7fc"></div>
<div style="left:0px;top:803px;width:1515px;height:2px;background:#4f71a6"></div>
<div style="left:0px;top:805px;width:1515px;height:1px;background:#f8fbff"></div>
<div style="left:0px;top:806px;width:1515px;height:3px;background:#dce6f3"></div>
<div style="left:7px;top:791px;width:1px;height:8px;background:#163f8c"></div>
<div style="left:9px;top:791px;width:0;height:0;border-top:4.0px solid transparent;border-bottom:4.0px solid transparent;border-right:4px solid #163f8c"></div>
<div style="left:25px;top:791px;width:0;height:0;border-top:4.0px solid transparent;border-bottom:4.0px solid transparent;border-right:4px solid #163f8c"></div>
<div style="left:41px;top:791px;width:0;height:0;border-top:4.0px solid transparent;border-bottom:4.0px solid transparent;border-left:4px solid #163f8c"></div>
<div style="left:57px;top:791px;width:0;height:0;border-top:4.0px solid transparent;border-bottom:4.0px solid transparent;border-left:4px solid #163f8c"></div>
<div style="left:62px;top:791px;width:1px;height:8px;background:#163f8c"></div>
<div style="left:70px;top:787px;width:1px;height:16px;background:#8ea4c4"></div>
<div style="left:71px;top:787px;width:73px;height:16px;background:linear-gradient(#ffffff 0%,#fffdf5 50%,#fbe7a0 75%,#f9cf3a 100%);clip-path:polygon(0 0,73px 0,60px 16px,0 16px)"></div>
<div style="left:71px;top:786px;width:73px;height:1px;background:#dfe8f4"></div>
<div style="left:131px;top:788px;width:74px;height:14px;background:linear-gradient(#84c284 0%,#78bb78 40%,#1f8d1f 52%,#3d9c3d 80%,#62ae62 100%);clip-path:polygon(13px 0,74px 0,62px 14px,0 14px)"></div>
<div style="left:194px;top:788px;width:88px;height:14px;background:linear-gradient(#ff9090 0%,#ff7676 40%,#ff1c1c 52%,#ff4444 80%,#ff6a6a 100%);clip-path:polygon(13px 0,88px 0,76px 14px,0 14px)"></div>
<svg style="position:absolute;left:129px;top:786px" width="16" height="18"><path d="M0 17 L5 17 L1 12 Z" fill="#7a96bd"/></svg>
<svg style="position:absolute;left:192px;top:786px" width="16" height="18"><line x1="1" y1="17" x2="14" y2="1" stroke="#64789f" stroke-width="1"/><line x1="2" y1="17" x2="15" y2="1" stroke="#ffffff" stroke-opacity="0.7" stroke-width="1"/><path d="M0 17 L5 17 L1 12 Z" fill="#7a96bd"/></svg>
<svg style="position:absolute;left:269px;top:786px" width="16" height="18"><line x1="1" y1="17" x2="14" y2="1" stroke="#64789f" stroke-width="1"/><line x1="2" y1="17" x2="15" y2="1" stroke="#ffffff" stroke-opacity="0.7" stroke-width="1"/><path d="M0 17 L5 17 L1 12 Z" fill="#7a96bd"/></svg>
<svg style="position:absolute;left:335px;top:786px" width="16" height="18"><line x1="1" y1="17" x2="14" y2="1" stroke="#64789f" stroke-width="1"/><line x1="2" y1="17" x2="15" y2="1" stroke="#ffffff" stroke-opacity="0.7" stroke-width="1"/><path d="M0 17 L5 17 L1 12 Z" fill="#7a96bd"/></svg>
<svg style="position:absolute;left:445px;top:786px" width="16" height="18"><line x1="1" y1="17" x2="14" y2="1" stroke="#64789f" stroke-width="1"/><line x1="2" y1="17" x2="15" y2="1" stroke="#ffffff" stroke-opacity="0.7" stroke-width="1"/><path d="M0 17 L5 17 L1 12 Z" fill="#7a96bd"/></svg>
<svg style="position:absolute;left:513px;top:786px" width="16" height="18"><line x1="1" y1="17" x2="14" y2="1" stroke="#64789f" stroke-width="1"/><line x1="2" y1="17" x2="15" y2="1" stroke="#ffffff" stroke-opacity="0.7" stroke-width="1"/><path d="M0 17 L5 17 L1 12 Z" fill="#7a96bd"/></svg>
<svg style="position:absolute;left:581px;top:786px" width="16" height="18"><line x1="1" y1="17" x2="14" y2="1" stroke="#64789f" stroke-width="1"/><line x1="2" y1="17" x2="15" y2="1" stroke="#ffffff" stroke-opacity="0.7" stroke-width="1"/><path d="M0 17 L5 17 L1 12 Z" fill="#7a96bd"/></svg>
<svg style="position:absolute;left:690px;top:786px" width="16" height="18"><line x1="1" y1="17" x2="14" y2="1" stroke="#64789f" stroke-width="1"/><line x1="2" y1="17" x2="15" y2="1" stroke="#ffffff" stroke-opacity="0.7" stroke-width="1"/><path d="M0 17 L5 17 L1 12 Z" fill="#7a96bd"/></svg>
<svg style="position:absolute;left:851px;top:786px" width="16" height="18"><line x1="1" y1="17" x2="14" y2="1" stroke="#64789f" stroke-width="1"/><line x1="2" y1="17" x2="15" y2="1" stroke="#ffffff" stroke-opacity="0.7" stroke-width="1"/><path d="M0 17 L5 17 L1 12 Z" fill="#7a96bd"/></svg>
<svg style="position:absolute;left:896px;top:786px" width="16" height="18"><line x1="1" y1="17" x2="14" y2="1" stroke="#64789f" stroke-width="1"/><line x1="2" y1="17" x2="15" y2="1" stroke="#ffffff" stroke-opacity="0.7" stroke-width="1"/><path d="M0 17 L5 17 L1 12 Z" fill="#7a96bd"/></svg>
<svg style="position:absolute;left:962px;top:786px" width="16" height="18"><line x1="1" y1="17" x2="14" y2="1" stroke="#64789f" stroke-width="1"/><line x1="2" y1="17" x2="15" y2="1" stroke="#ffffff" stroke-opacity="0.7" stroke-width="1"/><path d="M0 17 L5 17 L1 12 Z" fill="#7a96bd"/></svg>
<svg style="position:absolute;left:1036px;top:786px" width="16" height="18"><line x1="1" y1="17" x2="14" y2="1" stroke="#64789f" stroke-width="1"/><line x1="2" y1="17" x2="15" y2="1" stroke="#ffffff" stroke-opacity="0.7" stroke-width="1"/><path d="M0 17 L5 17 L1 12 Z" fill="#7a96bd"/></svg>
<svg style="position:absolute;left:1107px;top:786px" width="16" height="18"><line x1="1" y1="17" x2="14" y2="1" stroke="#64789f" stroke-width="1"/><line x1="2" y1="17" x2="15" y2="1" stroke="#ffffff" stroke-opacity="0.7" stroke-width="1"/><path d="M0 17 L5 17 L1 12 Z" fill="#7a96bd"/></svg>
<svg style="position:absolute;left:1161px;top:786px" width="16" height="18"><line x1="1" y1="17" x2="14" y2="1" stroke="#64789f" stroke-width="1"/><line x1="2" y1="17" x2="15" y2="1" stroke="#ffffff" stroke-opacity="0.7" stroke-width="1"/><path d="M0 17 L5 17 L1 12 Z" fill="#7a96bd"/></svg>
<svg style="position:absolute;left:1241px;top:786px" width="16" height="18"><line x1="1" y1="17" x2="14" y2="1" stroke="#64789f" stroke-width="1"/><line x1="2" y1="17" x2="15" y2="1" stroke="#ffffff" stroke-opacity="0.7" stroke-width="1"/><path d="M0 17 L5 17 L1 12 Z" fill="#7a96bd"/></svg>
<svg style="position:absolute;left:1394px;top:786px" width="16" height="18"><line x1="1" y1="17" x2="14" y2="1" stroke="#64789f" stroke-width="1"/><line x1="2" y1="17" x2="15" y2="1" stroke="#ffffff" stroke-opacity="0.7" stroke-width="1"/><path d="M0 17 L5 17 L1 12 Z" fill="#7a96bd"/></svg>
<svg style="position:absolute;left:1456px;top:786px" width="16" height="18"><line x1="1" y1="17" x2="14" y2="1" stroke="#64789f" stroke-width="1"/><line x1="2" y1="17" x2="15" y2="1" stroke="#ffffff" stroke-opacity="0.7" stroke-width="1"/><path d="M0 17 L5 17 L1 12 Z" fill="#7a96bd"/></svg>
<div class="t" style="left:80.30px;top:788px;height:16px;line-height:16px;font-size:13.2px;color:#000;transform:scaleX(0.9921);transform-origin:0 0;font-weight:bold;">Budget</div>
<div class="t" style="left:144.20px;top:788px;height:16px;line-height:16px;font-size:12.6px;color:#fff;transform:scaleX(1.0020);transform-origin:0 0;">Income</div>
<div class="t" style="left:208.20px;top:788px;height:16px;line-height:16px;font-size:12.6px;color:#fff;transform:scaleX(0.9505);transform-origin:0 0;">Expenses</div>
<div class="t" style="left:284.70px;top:788px;height:16px;line-height:16px;font-size:12.6px;color:#25318e;transform:scaleX(0.9355);transform-origin:0 0;">Banking</div>
<div class="t" style="left:352.40px;top:788px;height:16px;line-height:16px;font-size:12.6px;color:#25318e;transform:scaleX(0.9852);transform-origin:0 0;">Bills and Rates</div>
<div class="t" style="left:459.00px;top:788px;height:16px;line-height:16px;font-size:12.6px;color:#25318e;transform:scaleX(0.9889);transform-origin:0 0;">Children</div>
<div class="t" style="left:528.00px;top:788px;height:16px;line-height:16px;font-size:12.6px;color:#25318e;transform:scaleX(0.9821);transform-origin:0 0;">Clothing</div>
<div class="t" style="left:598.70px;top:788px;height:16px;line-height:16px;font-size:12.6px;color:#25318e;transform:scaleX(1.0236);transform-origin:0 0;">Entertainment</div>
<div class="t" style="left:708.10px;top:788px;height:16px;line-height:16px;font-size:12.6px;color:#25318e;transform:scaleX(1.0104);transform-origin:0 0;">Financial Commitments</div>
<div class="t" style="left:864.20px;top:788px;height:16px;line-height:16px;font-size:12.6px;color:#25318e;transform:scaleX(0.9577);transform-origin:0 0;">Food</div>
<div class="t" style="left:911.30px;top:788px;height:16px;line-height:16px;font-size:12.6px;color:#25318e;transform:scaleX(0.9748);transform-origin:0 0;">General</div>
<div class="t" style="left:976.30px;top:788px;height:16px;line-height:16px;font-size:12.6px;color:#25318e;transform:scaleX(0.9887);transform-origin:0 0;">Grooming</div>
<div class="t" style="left:1053.00px;top:788px;height:16px;line-height:16px;font-size:12.6px;color:#25318e;transform:scaleX(0.9809);transform-origin:0 0;">Holidays</div>
<div class="t" style="left:1121.20px;top:788px;height:16px;line-height:16px;font-size:12.6px;color:#25318e;transform:scaleX(0.9638);transform-origin:0 0;">Home</div>
<div class="t" style="left:1176.30px;top:788px;height:16px;line-height:16px;font-size:12.6px;color:#25318e;transform:scaleX(0.9993);transform-origin:0 0;">Insurance</div>
<div class="t" style="left:1264.50px;top:788px;height:16px;line-height:16px;font-size:12.6px;color:#25318e;transform:scaleX(1.0120);transform-origin:0 0;">Investment Property</div>
<div class="t" style="left:1408.00px;top:788px;height:16px;line-height:16px;font-size:12.6px;color:#25318e;transform:scaleX(0.9857);transform-origin:0 0;">Medical</div>
<div style="left:1393px;top:805px;width:1px;height:4px;background:#9fb3cf"></div>
<div style="left:1400px;top:806px;width:68px;height:3px;background:#eef3fa;border:1px solid #8ea5c6;border-bottom:none;border-radius:3px 3px 0 0;box-sizing:border-box"></div>
<div style="left:1401px;top:807px;width:22px;height:2px;background:#f7d9a6"></div>
<div style="left:1464px;top:787px;width:5px;height:16px;background:#ffffff;border:1px solid #5f7fae;box-sizing:border-box"></div>
<div style="left:1466px;top:791px;width:1px;height:9px;background:#7f95b8"></div>
<div style="left:1469px;top:787px;width:20px;height:16px;background:#7e9bc5"></div>
<div style="left:1476px;top:790px;width:0;height:0;border-top:5.0px solid transparent;border-bottom:5.0px solid transparent;border-right:6px solid #46587e"></div>
<div style="left:1489px;top:787px;width:26px;height:16px;background:#5574a6"></div>
<div style="left:1491px;top:788px;width:24px;height:14px;background:linear-gradient(#fafcfe,#eef2f7 50%,#c6d1df)"></div>
</body></html>
